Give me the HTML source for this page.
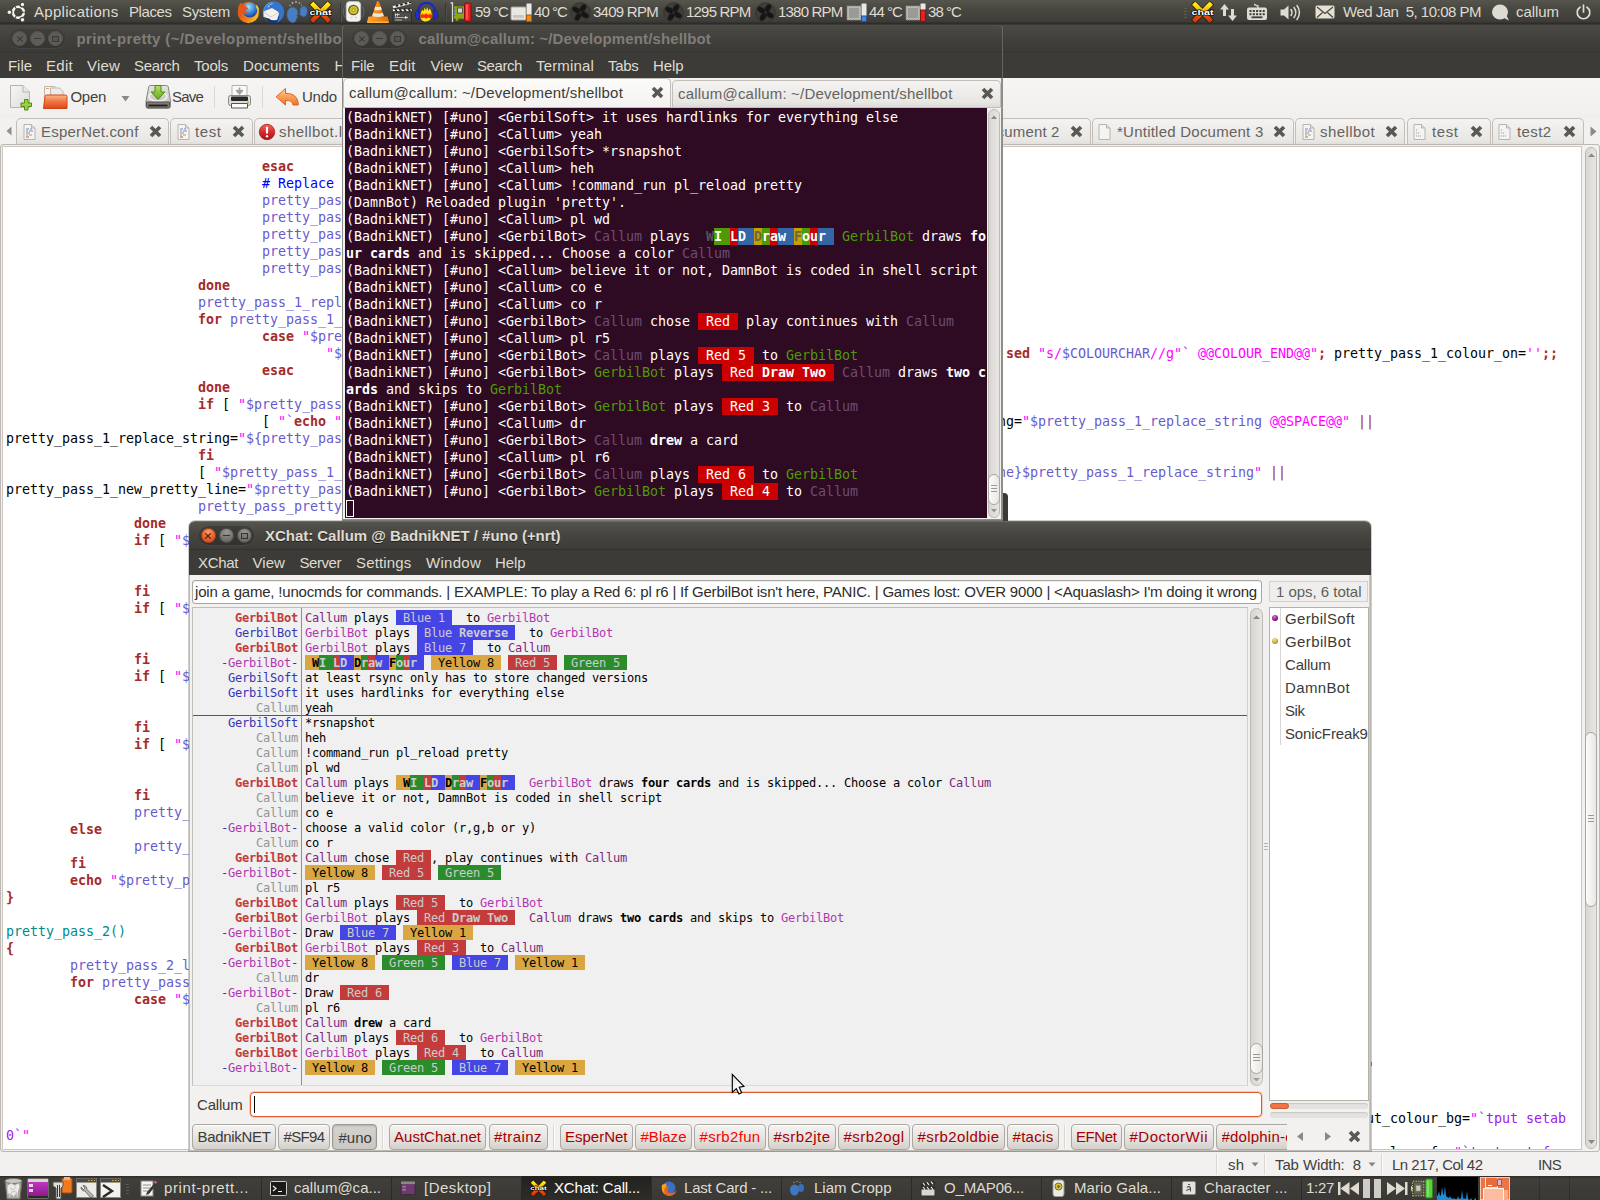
<!DOCTYPE html>
<html><head><meta charset="utf-8"><title>Desktop</title><style>
html,body{margin:0;padding:0;}
body{width:1600px;height:1200px;position:relative;overflow:hidden;background:#f2f1f0;font-family:'Liberation Sans', sans-serif;}
#root{position:absolute;left:0;top:0;width:1600px;height:1200px;overflow:hidden;}
#root div,#root svg,#root span{position:absolute;}
.l{white-space:pre;font-family:'Liberation Sans', sans-serif;}
.ged span{position:absolute;white-space:pre;font-family:'DejaVu Sans Mono', 'Liberation Mono', monospace;font-size:13.33px;line-height:17px;height:17px;letter-spacing:-0.0253px;}
.trm span{position:absolute;white-space:pre;font-family:'DejaVu Sans Mono', 'Liberation Mono', monospace;font-size:13.33px;line-height:17px;height:17px;letter-spacing:-0.0253px;}
.xc span{position:absolute;white-space:pre;font-family:'DejaVu Sans Mono', 'Liberation Mono', monospace;font-size:12px;line-height:17px;height:15px;letter-spacing:-0.2246px;}
</style></head><body><div id="root">
<div style="left:0px;top:24px;width:1600px;height:29px;background:linear-gradient(#2d2c29,#4a4944 4%,#3f3e3a 60%,#3b3a36);"></div><div style="left:0px;top:52px;width:1600px;height:1px;background:#363531;"></div><div style="left:10.0px;top:29.0px;width:55px;height:19px;border-radius:9.500px;background:rgba(0,0,0,.10);box-shadow:0 1px 0 rgba(255,255,255,.05);"></div><div style="left:12.0px;top:31.0px;width:15px;height:15px;box-sizing:border-box;border-radius:50%;background:#5d5c56;border:1px solid #56554f;"></div><svg style="left:15.5px;top:34.5px" width="8" height="8" viewBox="0 0 8 8"><path d="M1.300 1.300l5.400 5.400M6.700 1.300l-5.400 5.400" stroke="#3a3935" stroke-width="1.100"/></svg><div style="left:30.0px;top:31.0px;width:15px;height:15px;box-sizing:border-box;border-radius:50%;background:#5d5c56;border:1px solid #56554f;"></div><div style="left:34.0px;top:38.0px;width:7px;height:1.2px;background:#3a3935;"></div><div style="left:48.0px;top:31.0px;width:15px;height:15px;box-sizing:border-box;border-radius:50%;background:#5d5c56;border:1px solid #56554f;"></div><div style="left:52.0px;top:35.5px;width:7px;height:6px;box-sizing:border-box;border:1px solid #3a3935;background:rgba(0,0,0,.08);"></div><div style="left:0px;top:53px;width:1600px;height:25px;background:#3c3b37;"></div><div style="left:0px;top:78px;width:1600px;height:40px;background:linear-gradient(#f6f5f4,#f0efed);"></div><div style="left:0px;top:118px;width:1600px;height:1060px;background:#f2f1f0;"></div><svg style="left:9px;top:84px" width="24" height="27" viewBox="0 0 24 27"><defs><linearGradient id="npg" x1="0" y1="0" x2="1" y2="1"><stop offset="0" stop-color="#f6f6f5"/><stop offset="1" stop-color="#dcdcd9"/></linearGradient></defs><path d="M1.500 1.500h12.500L20.500 8v15.500h-19z" fill="url(#npg)" stroke="#b5b4af"/><path d="M14 1.500V8h6.500" fill="#e9e9e7" stroke="#b5b4af"/><path d="M15.500 15.500h3.500v3.500h3.500v3.500h-3.500v3.500h-3.500v-3.500h-3.500v-3.500h3.500z" fill="#9bd244" stroke="#4e8a12"/></svg><svg style="left:42px;top:85px" width="27" height="25" viewBox="0 0 27 25"><path d="M2.500 1.500h10l4 4V20h-14z" fill="#f3f3f1" stroke="#b9b8b3"/><path d="M4 3.500h3" stroke="#f0a050"/><path d="M8.500 3h9l3.500 3.500V20h-12.500z" fill="#ecebe8" stroke="#b9b8b3"/><defs><linearGradient id="opg" x1="0" y1="0" x2="0" y2="1"><stop offset="0" stop-color="#f9b98c"/><stop offset=".45" stop-color="#f27a44"/><stop offset="1" stop-color="#e0441a"/></linearGradient></defs><path d="M1.500 23.500L3 11.500q.2-1.500 1.500-1.500h19q1.500 0 1.500 1.500v12z" fill="url(#opg)" stroke="#cf4516"/></svg><svg style="left:121px;top:95px" width="9" height="7" viewBox="0 0 9 7"><path d="M.5 1h8L4.500 6.500z" fill="#8a8984"/></svg><svg style="left:145px;top:84px" width="26" height="26" viewBox="0 0 26 26"><defs><linearGradient id="svd" x1="0" y1="0" x2="0" y2="1"><stop offset="0" stop-color="#e4e4e1"/><stop offset="1" stop-color="#b9b9b5"/></linearGradient><linearGradient id="sva" x1="0" y1="0" x2="0" y2="1"><stop offset="0" stop-color="#b7e265"/><stop offset="1" stop-color="#62a81d"/></linearGradient></defs><path d="M5 1.500h16.500q1.500 0 1.800 1.500l2.200 14v5.500q0 1.500-1.500 1.500h-21.500q-1.500 0-1.500-1.500v-5.500l2.700-14q.3-1.500 1.800-1.500z" fill="url(#svd)" stroke="#8a8984"/><ellipse cx="13" cy="12.500" rx="9" ry="4.500" fill="none" stroke="#f1f1ef" stroke-width="1.600"/><path d="M1.500 18h23v4.500q0 1.500-1.500 1.500h-20q-1.500 0-1.500-1.500z" fill="#7c7b76" stroke="#55544f"/><path d="M3.500 21.500h19" stroke="#1f1e1c" stroke-width="1.800"/><path d="M10 1.500h6v6.500h3.800L13 15.500 6.200 8H10z" fill="url(#sva)" stroke="#4a8a10"/></svg><div style="left:214px;top:86px;width:1px;height:22px;background:#dcdad6;"></div><svg style="left:227px;top:84px" width="25" height="26" viewBox="0 0 25 26"><path d="M5 1.500h15v11h-15z" fill="#fafaf9" stroke="#b3b2ad"/><path d="M12.500 3.500v4M9.500 6.500h6l-3 3.500z" fill="#a3a29d" stroke="#a3a29d" stroke-width="1.600" stroke-linejoin="round"/><path d="M3.500 11.500h18q2 0 2 2v6q0 2-2 2h-18q-2 0-2-2v-6q0-2 2-2z" fill="#dddcd8" stroke="#8a8984"/><rect x="4" y="12.500" width="17" height="4.500" rx="1" fill="#2a2927"/><path d="M4.500 19.500h16v4.500h-16z" fill="#fbfbfa" stroke="#55544f"/><circle cx="21" cy="18.500" r=".9" fill="#6fd02e"/></svg><div style="left:262px;top:86px;width:1px;height:22px;background:#dcdad6;"></div><svg style="left:275px;top:86px" width="25" height="22" viewBox="0 0 25 22"><defs><linearGradient id="ung" x1="0" y1="0" x2="0" y2="1"><stop offset="0" stop-color="#fdd3a3"/><stop offset=".45" stop-color="#f8a561"/><stop offset="1" stop-color="#ee7326"/></linearGradient></defs><path d="M10.500 2.500L1.200 10.800l9.300 8.200v-4.500c4.500 0 6.500.5 7.500 4.500h5.300c0-8-5-11.700-12.800-11.700z" fill="url(#ung)" stroke="#d9651c" stroke-linejoin="round"/></svg><svg style="left:6px;top:126px" width="6" height="10" viewBox="0 0 6 10"><path d="M5.500.5v9L.5 5z" fill="#8f8e89"/></svg><div style="left:16px;top:118px;width:151px;height:27px;border:1px solid #c3beb8;border-bottom:none;border-radius:5px 5px 0 0;background:linear-gradient(#f4f3f1,#e9e7e4 80%,#dddbd7);"></div><svg style="left:23px;top:124px" width="13" height="16" viewBox="0 0 13 16"><path d="M1 .5h7.500L12 4v11.500H1z" fill="#f4f4f2" stroke="#b5b4af"/><path d="M8.500.5V4H12" fill="#dedcd8" stroke="#b5b4af"/><path d="M3 5h3M7 5h2" stroke="#6a8ed0" stroke-width="1"/><path d="M3 7h2M6 7h4" stroke="#b070c0" stroke-width="1"/><path d="M3 9h4" stroke="#6ab04c" stroke-width="1"/><path d="M3 11h2M6 11h3" stroke="#999" stroke-width="1"/><path d="M3 13h3" stroke="#e04a4a" stroke-width="1"/></svg><svg style="left:149px;top:125px" width="13" height="13" viewBox="0 0 13 13"><path d="M2 2l9 9M11 2l-9 9" stroke="#595853" stroke-width="3.600" stroke-linecap="butt"/></svg><div style="left:170px;top:118px;width:81px;height:27px;border:1px solid #c3beb8;border-bottom:none;border-radius:5px 5px 0 0;background:linear-gradient(#f4f3f1,#e9e7e4 80%,#dddbd7);"></div><svg style="left:177px;top:124px" width="13" height="16" viewBox="0 0 13 16"><path d="M1 .5h7.500L12 4v11.500H1z" fill="#f4f4f2" stroke="#b5b4af"/><path d="M8.500.5V4H12" fill="#dedcd8" stroke="#b5b4af"/><path d="M3 5h3M7 5h2" stroke="#6a8ed0" stroke-width="1"/><path d="M3 7h2M6 7h4" stroke="#b070c0" stroke-width="1"/><path d="M3 9h4" stroke="#6ab04c" stroke-width="1"/><path d="M3 11h2M6 11h3" stroke="#999" stroke-width="1"/><path d="M3 13h3" stroke="#e04a4a" stroke-width="1"/></svg><svg style="left:232px;top:125px" width="13" height="13" viewBox="0 0 13 13"><path d="M2 2l9 9M11 2l-9 9" stroke="#595853" stroke-width="3.600" stroke-linecap="butt"/></svg><div style="left:254px;top:118px;width:164px;height:27px;border:1px solid #c3beb8;border-bottom:none;border-radius:5px 5px 0 0;background:linear-gradient(#f4f3f1,#e9e7e4 80%,#dddbd7);"></div><svg style="left:258px;top:123px" width="18" height="18" viewBox="0 0 18 18"><defs><linearGradient id="erg" x1="0" y1="0" x2="0" y2="1"><stop offset="0" stop-color="#ec6a5e"/><stop offset=".5" stop-color="#d62a2c"/><stop offset="1" stop-color="#a80f1a"/></linearGradient></defs><circle cx="9" cy="9" r="7.700" fill="url(#erg)" stroke="#b0161c" stroke-width=".8"/><path d="M9 3.800v6.700" stroke="#fff" stroke-width="2.200"/><circle cx="9" cy="13.200" r="1.200" fill="#fff"/></svg><div style="left:880px;top:118px;width:209px;height:27px;border:1px solid #c3beb8;border-bottom:none;border-radius:5px 5px 0 0;background:linear-gradient(#f4f3f1,#e9e7e4 80%,#dddbd7);"></div><svg style="left:1070px;top:125px" width="13" height="13" viewBox="0 0 13 13"><path d="M2 2l9 9M11 2l-9 9" stroke="#595853" stroke-width="3.600" stroke-linecap="butt"/></svg><div style="left:1092px;top:118px;width:200px;height:27px;border:1px solid #c3beb8;border-bottom:none;border-radius:5px 5px 0 0;background:linear-gradient(#f4f3f1,#e9e7e4 80%,#dddbd7);"></div><svg style="left:1098px;top:124px" width="13" height="16" viewBox="0 0 13 16"><path d="M1 .5h7.500L12 4v11.500H1z" fill="#f4f4f2" stroke="#b5b4af"/><path d="M8.500.5V4H12" fill="#dedcd8" stroke="#b5b4af"/></svg><svg style="left:1273px;top:125px" width="13" height="13" viewBox="0 0 13 13"><path d="M2 2l9 9M11 2l-9 9" stroke="#595853" stroke-width="3.600" stroke-linecap="butt"/></svg><div style="left:1295px;top:118px;width:108px;height:27px;border:1px solid #c3beb8;border-bottom:none;border-radius:5px 5px 0 0;background:linear-gradient(#f4f3f1,#e9e7e4 80%,#dddbd7);"></div><svg style="left:1302px;top:124px" width="13" height="16" viewBox="0 0 13 16"><path d="M1 .5h7.500L12 4v11.500H1z" fill="#f4f4f2" stroke="#b5b4af"/><path d="M8.500.5V4H12" fill="#dedcd8" stroke="#b5b4af"/><path d="M3 5h3M7 5h2" stroke="#6a8ed0" stroke-width="1"/><path d="M3 7h2M6 7h4" stroke="#b070c0" stroke-width="1"/><path d="M3 9h4" stroke="#6ab04c" stroke-width="1"/><path d="M3 11h2M6 11h3" stroke="#999" stroke-width="1"/><path d="M3 13h3" stroke="#e04a4a" stroke-width="1"/></svg><svg style="left:1385px;top:125px" width="13" height="13" viewBox="0 0 13 13"><path d="M2 2l9 9M11 2l-9 9" stroke="#595853" stroke-width="3.600" stroke-linecap="butt"/></svg><div style="left:1407px;top:118px;width:82px;height:27px;border:1px solid #c3beb8;border-bottom:none;border-radius:5px 5px 0 0;background:linear-gradient(#f4f3f1,#e9e7e4 80%,#dddbd7);"></div><svg style="left:1413px;top:124px" width="13" height="16" viewBox="0 0 13 16"><path d="M1 .5h7.500L12 4v11.500H1z" fill="#f4f4f2" stroke="#b5b4af"/><path d="M8.500.5V4H12" fill="#dedcd8" stroke="#b5b4af"/><path d="M3 6h2M3 9h4M3 12h5" stroke="#9a9994" stroke-width="1.200" stroke-dasharray="1.200 .8"/></svg><svg style="left:1470px;top:125px" width="13" height="13" viewBox="0 0 13 13"><path d="M2 2l9 9M11 2l-9 9" stroke="#595853" stroke-width="3.600" stroke-linecap="butt"/></svg><div style="left:1492px;top:118px;width:90px;height:27px;border:1px solid #c3beb8;border-bottom:none;border-radius:5px 5px 0 0;background:linear-gradient(#f4f3f1,#e9e7e4 80%,#dddbd7);"></div><svg style="left:1498px;top:124px" width="13" height="16" viewBox="0 0 13 16"><path d="M1 .5h7.500L12 4v11.500H1z" fill="#f4f4f2" stroke="#b5b4af"/><path d="M8.500.5V4H12" fill="#dedcd8" stroke="#b5b4af"/><path d="M3 6h2M3 9h4M3 12h5" stroke="#9a9994" stroke-width="1.200" stroke-dasharray="1.200 .8"/></svg><svg style="left:1563px;top:125px" width="13" height="13" viewBox="0 0 13 13"><path d="M2 2l9 9M11 2l-9 9" stroke="#595853" stroke-width="3.600" stroke-linecap="butt"/></svg><svg style="left:1590px;top:126px" width="7" height="11" viewBox="0 0 7 11"><path d="M.5.500v10l6-5z" fill="#8a8984"/></svg><div style="left:0px;top:144px;width:1598px;height:1006px;border:1px solid #bdb8b2;border-radius:3px;background:#f2f1f0;"></div><div class="ged" style="left:2px;top:146px;width:1580px;height:1004px;background:#fff;border:1px solid #c9c5c0;box-sizing:border-box;overflow:hidden;"><span style="left:259px;top:11px;color:#a52a2a;font-weight:700;">esac</span><span style="left:259px;top:28px;color:#0000ff;"># Replace colour codes</span><span style="left:259px;top:45px;color:#6a5acd;">pretty_pass_1_colour_on=</span><span style="left:259px;top:62px;color:#6a5acd;">pretty_pass_1_replace_string=</span><span style="left:259px;top:79px;color:#6a5acd;">pretty_pass_1_new_pretty_line=</span><span style="left:259px;top:96px;color:#6a5acd;">pretty_pass_1_count=</span><span style="left:259px;top:113px;color:#6a5acd;">pretty_pass_1_word=</span><span style="left:195px;top:130px;color:#a52a2a;font-weight:700;">done</span><span style="left:195px;top:147px;color:#6a5acd;">pretty_pass_1_replace_string=</span><span style="left:195px;top:164px;color:#a52a2a;font-weight:700;">for</span><span style="left:227px;top:164px;color:#6a5acd;">pretty_pass_1_word in</span><span style="left:259px;top:181px;color:#a52a2a;font-weight:700;">case</span><span style="left:299px;top:181px;color:#ff00ff;">"</span><span style="left:307px;top:181px;color:#6a5acd;">$pretty_pass_1_word</span><span style="left:323px;top:198px;color:#ff00ff;">"</span><span style="left:331px;top:198px;color:#6a5acd;">$COLOURCHAR</span><span style="left:259px;top:215px;color:#a52a2a;font-weight:700;">esac</span><span style="left:195px;top:232px;color:#a52a2a;font-weight:700;">done</span><span style="left:195px;top:249px;color:#a52a2a;font-weight:700;">if</span><span style="left:219px;top:249px;color:#000;">[</span><span style="left:235px;top:249px;color:#ff00ff;">"</span><span style="left:243px;top:249px;color:#6a5acd;">$pretty_pass_1_colour_on</span><span style="left:259px;top:266px;color:#000;">[</span><span style="left:275px;top:266px;color:#ff00ff;">"</span><span style="left:283px;top:266px;color:#a020f0;">`</span><span style="left:291px;top:266px;color:#a52a2a;font-weight:700;">echo</span><span style="left:331px;top:266px;color:#ff00ff;">"</span><span style="left:339px;top:266px;color:#6a5acd;">$pretty</span><span style="left:3px;top:283px;color:#000;">pretty_pass_1_replace_string=</span><span style="left:235px;top:283px;color:#ff00ff;">"</span><span style="left:243px;top:283px;color:#6a5acd;">${pretty_pass_1</span><span style="left:195px;top:300px;color:#a52a2a;font-weight:700;">fi</span><span style="left:195px;top:317px;color:#000;">[</span><span style="left:211px;top:317px;color:#ff00ff;">"</span><span style="left:219px;top:317px;color:#6a5acd;">$pretty_pass_1_new</span><span style="left:3px;top:334px;color:#000;">pretty_pass_1_new_pretty_line=</span><span style="left:243px;top:334px;color:#ff00ff;">"</span><span style="left:251px;top:334px;color:#6a5acd;">$pretty_pass_1</span><span style="left:195px;top:351px;color:#6a5acd;">pretty_pass_pretty_line=</span><span style="left:131px;top:368px;color:#a52a2a;font-weight:700;">done</span><span style="left:131px;top:385px;color:#a52a2a;font-weight:700;">if</span><span style="left:155px;top:385px;color:#000;">[</span><span style="left:171px;top:385px;color:#ff00ff;">"</span><span style="left:179px;top:385px;color:#6a5acd;">$pretty</span><span style="left:131px;top:453px;color:#a52a2a;font-weight:700;">if</span><span style="left:155px;top:453px;color:#000;">[</span><span style="left:171px;top:453px;color:#ff00ff;">"</span><span style="left:179px;top:453px;color:#6a5acd;">$pretty</span><span style="left:131px;top:521px;color:#a52a2a;font-weight:700;">if</span><span style="left:155px;top:521px;color:#000;">[</span><span style="left:171px;top:521px;color:#ff00ff;">"</span><span style="left:179px;top:521px;color:#6a5acd;">$pretty</span><span style="left:131px;top:589px;color:#a52a2a;font-weight:700;">if</span><span style="left:155px;top:589px;color:#000;">[</span><span style="left:171px;top:589px;color:#ff00ff;">"</span><span style="left:179px;top:589px;color:#6a5acd;">$pretty</span><span style="left:131px;top:436px;color:#a52a2a;font-weight:700;">fi</span><span style="left:131px;top:504px;color:#a52a2a;font-weight:700;">fi</span><span style="left:131px;top:572px;color:#a52a2a;font-weight:700;">fi</span><span style="left:131px;top:640px;color:#a52a2a;font-weight:700;">fi</span><span style="left:131px;top:657px;color:#6a5acd;">pretty_line=</span><span style="left:67px;top:674px;color:#a52a2a;font-weight:700;">else</span><span style="left:131px;top:691px;color:#6a5acd;">pretty_line=</span><span style="left:67px;top:708px;color:#a52a2a;font-weight:700;">fi</span><span style="left:67px;top:725px;color:#a52a2a;font-weight:700;">echo</span><span style="left:107px;top:725px;color:#ff00ff;">"</span><span style="left:115px;top:725px;color:#6a5acd;">$pretty_pass_pretty</span><span style="left:3px;top:742px;color:#a52a2a;font-weight:700;">}</span><span style="left:3px;top:776px;color:#008a8c;">pretty_pass_2()</span><span style="left:3px;top:793px;color:#a52a2a;font-weight:700;">{</span><span style="left:67px;top:810px;color:#6a5acd;">pretty_pass_2_line=</span><span style="left:67px;top:827px;color:#a52a2a;font-weight:700;">for</span><span style="left:99px;top:827px;color:#6a5acd;">pretty_pass_2_word</span><span style="left:131px;top:844px;color:#a52a2a;font-weight:700;">case</span><span style="left:171px;top:844px;color:#ff00ff;">"</span><span style="left:179px;top:844px;color:#6a5acd;">$pretty</span><span style="left:3px;top:980px;color:#a020f0;">0`</span><span style="left:19px;top:980px;color:#ff00ff;">"</span><span style="left:1003px;top:198px;color:#a52a2a;font-weight:700;">sed</span><span style="left:1035px;top:198px;color:#ff00ff;">"s/</span><span style="left:1059px;top:198px;color:#6a5acd;">$COLOURCHAR</span><span style="left:1147px;top:198px;color:#ff00ff;">//g"</span><span style="left:1179px;top:198px;color:#a020f0;">`</span><span style="left:1195px;top:198px;color:#ff00ff;">@@COLOUR_END@@"</span><span style="left:1315px;top:198px;color:#a52a2a;font-weight:700;">;</span><span style="left:1331px;top:198px;color:#000;">pretty_pass_1_colour_on=</span><span style="left:1523px;top:198px;color:#ff00ff;">''</span><span style="left:1539px;top:198px;color:#a52a2a;font-weight:700;">;;</span><span style="left:995px;top:266px;color:#000;">ng=</span><span style="left:1019px;top:266px;color:#ff00ff;">"</span><span style="left:1027px;top:266px;color:#6a5acd;">$pretty_pass_1_replace_string</span><span style="left:1267px;top:266px;color:#ff00ff;">@@SPACE@@"</span><span style="left:1355px;top:266px;color:#a52a2a;">||</span><span style="left:995px;top:317px;color:#6a5acd;">ne}$pretty_pass_1_replace_string</span><span style="left:1251px;top:317px;color:#ff00ff;">"</span><span style="left:1267px;top:317px;color:#a52a2a;">||</span><span style="left:1363px;top:912px;color:#ff00ff;">"</span><span style="left:1363px;top:963px;color:#000;">ut_colour_bg=</span><span style="left:1467px;top:963px;color:#ff00ff;">"</span><span style="left:1475px;top:963px;color:#a020f0;">`tput setab</span><span style="left:1363px;top:997px;color:#000;">_colour_fg=</span><span style="left:1451px;top:997px;color:#ff00ff;">"</span><span style="left:1459px;top:997px;color:#a020f0;">`tput setaf</span></div><div style="left:1585px;top:147px;width:12px;height:1002px;border:1px solid #bdb9b3;border-radius:7px;background:linear-gradient(90deg,#d9d6d2,#e8e6e3);box-sizing:border-box;"></div><svg style="left:1588px;top:153px" width="7" height="4" viewBox="0 0 7 4"><path d="M0 4L3.500 .5 7 4z" fill="#8a8883"/></svg><svg style="left:1588px;top:1140px" width="7" height="4" viewBox="0 0 7 4"><path d="M0 0l3.500 4L7 0z" fill="#8a8883"/></svg><div style="left:1585px;top:732px;width:12px;height:175px;border:1px solid #a9a59f;border-radius:7px;background:linear-gradient(90deg,#fbfbfa,#e9e7e4);box-sizing:border-box;"></div><div style="left:1588px;top:815px;width:6px;height:8px;background:repeating-linear-gradient(#9c9993 0 1px,transparent 1px 3px);"></div><div style="left:0px;top:1152px;width:1600px;height:24px;background:#f2f1f0;"></div><div style="left:1216px;top:1154px;width:1px;height:21px;background:#dad7d2;border-right:1px solid #fbfaf9;"></div><div style="left:1264px;top:1154px;width:1px;height:21px;background:#dad7d2;border-right:1px solid #fbfaf9;"></div><div style="left:1381px;top:1154px;width:1px;height:21px;background:#dad7d2;border-right:1px solid #fbfaf9;"></div><svg style="left:1251px;top:1162px" width="8" height="5" viewBox="0 0 8 5"><path d="M.5.500h7L4 4.500z" fill="#85847f"/></svg><svg style="left:1368px;top:1162px" width="8" height="5" viewBox="0 0 8 5"><path d="M.5.500h7L4 4.500z" fill="#85847f"/></svg><span class="l" style="left:76.5px;top:31.30px;font-size:15px;line-height:15px;color:#807d78;font-weight:700;letter-spacing:0.357px;">print-pretty (~/Development/shellbot</span><span class="l" style="left:8.0px;top:58.30px;font-size:15px;line-height:15px;color:#dfdbd2;letter-spacing:-0.043px;">File</span><span class="l" style="left:46.0px;top:58.30px;font-size:15px;line-height:15px;color:#dfdbd2;letter-spacing:0.285px;">Edit</span><span class="l" style="left:87.0px;top:58.30px;font-size:15px;line-height:15px;color:#dfdbd2;letter-spacing:0.188px;">View</span><span class="l" style="left:134.0px;top:58.30px;font-size:15px;line-height:15px;color:#dfdbd2;letter-spacing:-0.339px;">Search</span><span class="l" style="left:194.0px;top:58.30px;font-size:15px;line-height:15px;color:#dfdbd2;letter-spacing:-0.206px;">Tools</span><span class="l" style="left:243.0px;top:58.30px;font-size:15px;line-height:15px;color:#dfdbd2;letter-spacing:0.069px;">Documents</span><span class="l" style="left:334.5px;top:58.30px;font-size:15px;line-height:15px;color:#dfdbd2;letter-spacing:-0.090px;">Help</span><span class="l" style="left:70.5px;top:89.10px;font-size:15px;line-height:15px;color:#42413d;letter-spacing:-0.301px;">Open</span><span class="l" style="left:172.0px;top:89.10px;font-size:15px;line-height:15px;color:#42413d;letter-spacing:-0.801px;">Save</span><span class="l" style="left:302.0px;top:89.10px;font-size:15px;line-height:15px;color:#42413d;letter-spacing:-0.215px;">Undo</span><span class="l" style="left:41.0px;top:124.30px;font-size:15px;line-height:15px;color:#65635e;letter-spacing:0.189px;">EsperNet.conf</span><span class="l" style="left:195.0px;top:124.30px;font-size:15px;line-height:15px;color:#65635e;letter-spacing:0.578px;">test</span><span class="l" style="left:279.0px;top:124.30px;font-size:15px;line-height:15px;color:#65635e;letter-spacing:0.426px;">shellbot.log</span><span class="l" style="left:915.0px;top:124.30px;font-size:15px;line-height:15px;color:#65635e;letter-spacing:0.138px;">*Untitled Document 2</span><span class="l" style="left:1117.0px;top:124.30px;font-size:15px;line-height:15px;color:#65635e;letter-spacing:0.237px;">*Untitled Document 3</span><span class="l" style="left:1320.0px;top:124.30px;font-size:15px;line-height:15px;color:#65635e;letter-spacing:0.412px;">shellbot</span><span class="l" style="left:1432.0px;top:124.30px;font-size:15px;line-height:15px;color:#65635e;letter-spacing:0.578px;">test</span><span class="l" style="left:1517.0px;top:124.30px;font-size:15px;line-height:15px;color:#65635e;letter-spacing:0.394px;">test2</span><span class="l" style="left:1228.0px;top:1157.30px;font-size:15px;line-height:15px;color:#42413d;letter-spacing:0.328px;">sh</span><span class="l" style="left:1275.0px;top:1157.30px;font-size:15px;line-height:15px;color:#42413d;letter-spacing:-0.119px;white-space:pre;">Tab Width:  8</span><span class="l" style="left:1392.0px;top:1157.30px;font-size:15px;line-height:15px;color:#42413d;letter-spacing:-0.506px;">Ln 217, Col 42</span><span class="l" style="left:1538.0px;top:1157.30px;font-size:15px;line-height:15px;color:#42413d;letter-spacing:-0.672px;">INS</span>
<div style="left:0px;top:0px;width:1600px;height:24px;background:linear-gradient(#55544d,#48473f 40%,#3e3d39 88%,#2a2926);"></div><svg style="left:7px;top:1px" width="23" height="23" viewBox="0 0 23 23"><circle cx="11.400" cy="11.200" r="5.500" fill="none" stroke="#f7f5f1" stroke-width="2.400"/><g stroke="#484741" stroke-width="1.100"><path d="M11.400 11.200L19.500 11.200M11.400 11.200L7.300 4.200M11.400 11.200L7.300 18.200"/></g><g fill="#484741"><circle cx="2.600" cy="11.200" r="2.900"/><circle cx="15.500" cy="3.700" r="2.900"/><circle cx="15.500" cy="18.700" r="2.900"/></g><g fill="#f7f5f1"><circle cx="2.400" cy="11.200" r="1.700"/><circle cx="15.500" cy="3.500" r="1.700"/><circle cx="15.500" cy="18.800" r="1.700"/></g></svg><svg style="left:236px;top:0px" width="25" height="25" viewBox="0 0 25 25"><defs><radialGradient id="ffb" cx=".42" cy=".3" r=".75"><stop offset="0" stop-color="#a8defa"/><stop offset=".5" stop-color="#3f8fdc"/><stop offset="1" stop-color="#16328a"/></radialGradient><linearGradient id="ffo" x1="0" y1=".3" x2="1" y2=".7"><stop offset="0" stop-color="#df4f17"/><stop offset=".55" stop-color="#ee7d1b"/><stop offset="1" stop-color="#f9c92c"/></linearGradient></defs><circle cx="12.300" cy="12.600" r="10.600" fill="url(#ffo)"/><circle cx="13.800" cy="10" r="7.500" fill="url(#ffb)"/><path d="M2 10C1.800 6.500 3.300 3.800 5.300 2.200 5.300 4 6.300 5 8.300 5.500 10 6 11.500 7.500 12.500 9.500 11 9.300 9.800 9.800 9 11 10.500 11.200 11.500 12 12 13.200 9 14.700 6.500 13.700 5.500 11.700 5 13.700 5.800 16 7.500 18 4 16.500 2.200 13.500 2 10z" fill="#e3581a"/><path d="M20.500 4.500c2 2 3 5 2.500 8-.5-2-1.500-3.500-3-4.500z" fill="#f9c92c"/></svg><svg style="left:261px;top:0px" width="25" height="25" viewBox="0 0 25 25"><defs><linearGradient id="tbb" x1="0" y1="0" x2=".6" y2="1"><stop offset="0" stop-color="#6aaef0"/><stop offset=".5" stop-color="#2f6cc4"/><stop offset="1" stop-color="#173a86"/></linearGradient></defs><circle cx="12.600" cy="12.300" r="10.700" fill="url(#tbb)"/><path d="M2.500 11.500L11 8l7.500 4.500-2.500 7.500-10 .5-3.500-4z" fill="#f4f1ec"/><path d="M3 12l7 5 8-4.500" fill="none" stroke="#c9c5bd" stroke-width=".8"/><path d="M4.500 9C6 4.500 9.500 2 13.500 2c5 0 9 3.800 9.600 8.800.6 5.500-2.600 10.200-7.600 12 2.800-3 3.700-6.800 2.200-10.300C16.200 9 13 7.600 10 8c-1.800.3-3.500 1-5.500 1z" fill="#3576cc"/><path d="M6 7.500C7.500 4.500 10 3 13 3c-2 .8-3.200 2-3.800 4z" fill="#8cc4f5"/><circle cx="9.300" cy="6" r=".7" fill="#10244f"/><path d="M3 16.500c1.500 3.500 5 6 9 6 1.500 0 3-.4 4-1-3 0-6-1-8-3-1.500 0-3.500-.8-5-2z" fill="#15306e"/></svg><svg style="left:285px;top:0px" width="25" height="25" viewBox="0 0 25 25"><path d="M2 14.500C2 10 4.500 7.300 7.700 7.300c3 0 5 2.400 5 5.400 0 1.300-.4 2.300-.9 3l1 1.600-1.200.6c0 2.500-1.500 4.600-3.600 4.600C4.500 22.500 2 19 2 14.500z" fill="#4a7cc0" stroke="#3a66a6" stroke-width=".6"/><path d="M15 10.800c0-2.600 1.500-4.600 3.600-4.600 2 0 3.600 2 3.600 5 0 3-1.600 5.500-3.700 5.500-1 0-1.900-.5-2.500-1.400l-1.500-.6.800-1.500c-.2-.7-.300-1.500-.300-2.400z" fill="#4a7cc0" stroke="#3a66a6" stroke-width=".6"/><g fill="#b9b7ae"><circle cx="5" cy="5.500" r=".7"/><circle cx="7.500" cy="3" r=".9"/><circle cx="11" cy="2" r=".9"/><circle cx="14.500" cy="3" r=".8"/><circle cx="16.500" cy="5" r=".6"/></g></svg><svg style="left:309px;top:0.5px" width="23" height="23" viewBox="0 0 24 24"><defs><linearGradient id="xg1" x1="0" y1="0" x2="0" y2="1"><stop offset="0" stop-color="#ffe81a"/><stop offset=".46" stop-color="#f7a600"/><stop offset=".54" stop-color="#f4650a"/><stop offset="1" stop-color="#d93a08"/></linearGradient></defs><path d="M4.500 4L19.500 19.500M19.500 4L4.500 19.500" stroke="#2a1a08" stroke-width="6.400" stroke-linecap="square" fill="none"/><path d="M4.500 4L19.500 19.500M19.500 4L4.500 19.500" stroke="url(#xg1)" stroke-width="4.800" stroke-linecap="square" fill="none"/><text x="12" y="14.600" text-anchor="middle" font-family="Liberation Sans, sans-serif" font-weight="700" font-size="7.800" fill="#fff" stroke="#000" stroke-width="1.200" paint-order="stroke" textLength="23" lengthAdjust="spacingAndGlyphs">chat</text></svg><div style="left:340px;top:3px;width:1px;height:19px;background:#36352f;border-right:1px solid #55544d;"></div><svg style="left:342px;top:0px" width="23" height="24" viewBox="0 0 23 24"><path d="M2.500 6.500c-1.500 3-1.500 7 0 10.500M20.800 6.500c1.500 3 1.500 7 0 10.500" fill="none" stroke="#4a6f9e" stroke-width=".9"/><rect x="4.200" y="1.500" width="14.500" height="20" rx="3.500" fill="#f3f3f1" stroke="#c4c3be" stroke-width=".8"/><circle cx="11.500" cy="10" r="4.700" fill="#d9c62a" stroke="#5e5a22" stroke-width="1.300"/><circle cx="11.500" cy="10" r="2.400" fill="#b9a820"/><circle cx="11.500" cy="10" r="1" fill="#c9c9c4"/><path d="M8.500 17.500h2M12.500 17.500h2.500" stroke="#d2d1cc" stroke-width="1.600"/></svg><svg style="left:366px;top:0px" width="25" height="25" viewBox="0 0 25 25"><defs><linearGradient id="vlg" x1="0" y1="0" x2="1" y2="0"><stop offset="0" stop-color="#f9a33a"/><stop offset=".5" stop-color="#f48a12"/><stop offset="1" stop-color="#e26f05"/></linearGradient></defs><path d="M2.500 16.500h19l1.500 5.500q0 1-1 1H2q-1 0-1-1z" fill="url(#vlg)"/><path d="M1.200 21.500h21.600v.8q0 .7-1 .7H2.200q-1 0-1-.7z" fill="#fbb040"/><path d="M11 1.500q1-1.200 2 0L18.500 18q-6.500 2.500-13 0z" fill="url(#vlg)"/><path d="M9.200 6.500q2.800 1 5.600 0l1 3.200q-3.800 1.300-7.600 0z" fill="#e9e7e4"/><path d="M7.200 12.700q4.800 1.700 9.600 0l1 3.300q-5.800 2-11.600 0z" fill="#e9e7e4"/></svg><svg style="left:391px;top:0px" width="23" height="24" viewBox="0 0 23 24"><path d="M1.200 5.800L20 1l.8 3L2 8.800z" fill="#f4f4f2" stroke="#2c2b28" stroke-width=".6"/><g fill="#1d1c1a"><ellipse cx="6" cy="5.700" rx="1.500" ry="1" transform="rotate(-14 6 5.700)"/><ellipse cx="10.500" cy="4.600" rx="1.500" ry="1" transform="rotate(-14 10.500 4.600)"/><ellipse cx="15" cy="3.500" rx="1.500" ry="1" transform="rotate(-14 15 3.500)"/><ellipse cx="19" cy="2.500" rx="1.200" ry=".9" transform="rotate(-14 19 2.500)"/></g><path d="M1.500 9h19.500v2.800H1.500z" fill="#f4f4f2" stroke="#2c2b28" stroke-width=".6"/><path d="M4 9l2 2.800M8.500 9l2 2.800M13 9l2 2.800M17.500 9l2 2.800" stroke="#1d1c1a" stroke-width="1.600"/><rect x="2" y="11.800" width="18.500" height="10.200" fill="#4d4c49" stroke="#2c2b28" stroke-width=".8"/><path d="M4 14.500h5M4 17.500h13M4 20h7" stroke="#c9c8c3" stroke-width=".8"/><path d="M14 16l3 1.500-3 1.500z" fill="#e9e8e4"/><path d="M4.500 13.500v3M6.500 13.500v3" stroke="#e9e8e4" stroke-width=".8"/></svg><svg style="left:414px;top:0px" width="25" height="25" viewBox="0 0 25 25"><path d="M4 14C3.500 6.500 8 2.800 12.500 2.800S21.500 6.500 21 14" fill="none" stroke="#1a28c4" stroke-width="2.200"/><path d="M1.200 14.500c0-3 1.800-4.500 3.800-4.500v9.500c-2 0-3.800-2-3.800-5zM23.800 14.500c0-3-1.800-4.500-3.800-4.500v9.500c2 0 3.800-2 3.800-5z" fill="#1f2fd0" stroke="#121c8a" stroke-width=".6"/><path d="M6.500 16c0-3 1-5 2-6.500l1 2 1.200-4 1.300 3 1.300-3.500 1.200 4 1.200-2.500c1.200 1.500 2 4 2 7 0 3-2.500 6-6.100 6S6.500 19 6.500 16z" fill="#ffe21a"/><path d="M6.600 14.500l2-.8 1.500.8 2-1.200 2 1.200 2-.8 2.200.8v3l-2.200.8-2-.8-2 1.200-2-1.200-1.500.8-2-.8z" fill="#ff2a0a"/><path d="M6.600 14.500l2-.8 1.500.8 2-1.200 2 1.200 2-.8 2.200.8" fill="none" stroke="#ff9a10" stroke-width=".9"/></svg><div style="left:445px;top:3px;width:1px;height:19px;background:#3a3934;border-right:1px solid #4c4b45;"></div><svg style="left:449px;top:2px" width="24" height="21" viewBox="0 0 24 21"><path d="M1.500 1h2v19" fill="none" stroke="#d9d9d4" stroke-width="1.300"/><path d="M4.500 4h11v13h-6v2h-3v-2h-2z" fill="#93a21c" stroke="#4f5a0c" stroke-width=".8"/><rect x="8.500" y="6" width="5" height="5" fill="#d5d5d0" stroke="#3a3a38" stroke-width=".8"/><path d="M5.500 6.500v1.500M5.500 9.500v1.500M5.500 12.500v1.500" stroke="#3b6fd0" stroke-width="1.400"/><rect x="15.500" y="1" width="6.500" height="18.500" rx="1.500" fill="#ea2020" stroke="#8a0c0c"/><rect x="17" y="2.500" width="2" height="15" fill="#f45a5a"/></svg><svg style="left:510px;top:2px" width="24" height="21" viewBox="0 0 24 21"><rect x="1" y="5" width="15" height="13" rx="1" fill="#e9e8e4" stroke="#a3a29d"/><rect x="3" y="13" width="11" height="3" fill="#c8c7c2"/><rect x="16.500" y="1.500" width="5" height="18" rx="1" fill="#ecebe8" stroke="#a3a29d"/><rect x="16.500" y="13" width="5" height="6.500" fill="#f08a1c" stroke="#a85808"/></svg><svg style="left:570px;top:2px" width="21" height="21" viewBox="0 0 21 21"><circle cx="10.500" cy="10.500" r="9.800" fill="#3f3e3a" stroke="#35342f" stroke-width="1"/><ellipse cx="10.500" cy="5.800" rx="2.700" ry="4.600" transform="rotate(30 10.500 10.500)" fill="#161514" stroke="#2f2e2b" stroke-width=".5"/><ellipse cx="10.500" cy="5.800" rx="2.700" ry="4.600" transform="rotate(120 10.500 10.500)" fill="#161514" stroke="#2f2e2b" stroke-width=".5"/><ellipse cx="10.500" cy="5.800" rx="2.700" ry="4.600" transform="rotate(210 10.500 10.500)" fill="#161514" stroke="#2f2e2b" stroke-width=".5"/><ellipse cx="10.500" cy="5.800" rx="2.700" ry="4.600" transform="rotate(300 10.500 10.500)" fill="#161514" stroke="#2f2e2b" stroke-width=".5"/><circle cx="10.500" cy="10.500" r="1.500" fill="#2a2927"/></svg><svg style="left:663px;top:2px" width="21" height="21" viewBox="0 0 21 21"><circle cx="10.500" cy="10.500" r="9.800" fill="#3f3e3a" stroke="#35342f" stroke-width="1"/><ellipse cx="10.500" cy="5.800" rx="2.700" ry="4.600" transform="rotate(30 10.500 10.500)" fill="#161514" stroke="#2f2e2b" stroke-width=".5"/><ellipse cx="10.500" cy="5.800" rx="2.700" ry="4.600" transform="rotate(120 10.500 10.500)" fill="#161514" stroke="#2f2e2b" stroke-width=".5"/><ellipse cx="10.500" cy="5.800" rx="2.700" ry="4.600" transform="rotate(210 10.500 10.500)" fill="#161514" stroke="#2f2e2b" stroke-width=".5"/><ellipse cx="10.500" cy="5.800" rx="2.700" ry="4.600" transform="rotate(300 10.500 10.500)" fill="#161514" stroke="#2f2e2b" stroke-width=".5"/><circle cx="10.500" cy="10.500" r="1.500" fill="#2a2927"/></svg><svg style="left:755px;top:2px" width="21" height="21" viewBox="0 0 21 21"><circle cx="10.500" cy="10.500" r="9.800" fill="#3f3e3a" stroke="#35342f" stroke-width="1"/><ellipse cx="10.500" cy="5.800" rx="2.700" ry="4.600" transform="rotate(30 10.500 10.500)" fill="#161514" stroke="#2f2e2b" stroke-width=".5"/><ellipse cx="10.500" cy="5.800" rx="2.700" ry="4.600" transform="rotate(120 10.500 10.500)" fill="#161514" stroke="#2f2e2b" stroke-width=".5"/><ellipse cx="10.500" cy="5.800" rx="2.700" ry="4.600" transform="rotate(210 10.500 10.500)" fill="#161514" stroke="#2f2e2b" stroke-width=".5"/><ellipse cx="10.500" cy="5.800" rx="2.700" ry="4.600" transform="rotate(300 10.500 10.500)" fill="#161514" stroke="#2f2e2b" stroke-width=".5"/><circle cx="10.500" cy="10.500" r="1.500" fill="#2a2927"/></svg><svg style="left:846px;top:2px" width="23" height="21" viewBox="0 0 23 21"><rect x="1" y="4" width="14" height="14" fill="#b9b9b4" stroke="#8a8a86" stroke-width="1" stroke-dasharray="1.500 1"/><rect x="3" y="6" width="10" height="10" fill="#9a9a96"/><rect x="15.500" y="1.500" width="5" height="18" rx="1" fill="#e8e8e6" stroke="#9c9c98"/><rect x="15.500" y="14" width="5" height="5.500" fill="#4a86d8" stroke="#1f4f99"/></svg><svg style="left:905px;top:2px" width="23" height="21" viewBox="0 0 23 21"><rect x="1" y="4" width="14" height="14" fill="#b9b9b4" stroke="#8a8a86" stroke-width="1" stroke-dasharray="1.500 1"/><rect x="3" y="6" width="10" height="10" fill="#9a9a96"/><rect x="15.500" y="1.500" width="5" height="18" rx="1" fill="#e8e8e6" stroke="#9c9c98"/><rect x="15.500" y="8" width="5" height="11.500" fill="#e52222" stroke="#8a1010"/></svg><div style="left:1184px;top:8px;width:3px;height:10px;background:repeating-linear-gradient(#5b5a54 0 1px,transparent 1px 3px);"></div><svg style="left:1191px;top:0.5px" width="23" height="23" viewBox="0 0 24 24"><defs><linearGradient id="xg2" x1="0" y1="0" x2="0" y2="1"><stop offset="0" stop-color="#ffe81a"/><stop offset=".46" stop-color="#f7a600"/><stop offset=".54" stop-color="#f4650a"/><stop offset="1" stop-color="#d93a08"/></linearGradient></defs><path d="M4.500 4L19.500 19.500M19.500 4L4.500 19.500" stroke="#2a1a08" stroke-width="6.400" stroke-linecap="square" fill="none"/><path d="M4.500 4L19.500 19.500M19.500 4L4.500 19.500" stroke="url(#xg2)" stroke-width="4.800" stroke-linecap="square" fill="none"/><text x="12" y="14.600" text-anchor="middle" font-family="Liberation Sans, sans-serif" font-weight="700" font-size="7.800" fill="#fff" stroke="#000" stroke-width="1.200" paint-order="stroke" textLength="23" lengthAdjust="spacingAndGlyphs">chat</text></svg><svg style="left:1219px;top:3px" width="19" height="19" viewBox="0 0 19 19"><path d="M5.500 1L10 6.500H7V13H4V6.500H1z" fill="#dfdbd2"/><path d="M13.500 18L9 12.500h3V6h3v6.500h3z" fill="#dfdbd2"/></svg><svg style="left:1246px;top:3px" width="22" height="19" viewBox="0 0 22 19"><path d="M8 1.500c2 0 2 1.500 4 1.500v2" fill="none" stroke="#dfdbd2" stroke-width="1.400"/><rect x="1" y="4.500" width="20" height="12.500" rx="2" fill="#dfdbd2"/><g fill="#3d3c38"><rect x="3.500" y="7" width="2" height="2"/><rect x="6.800" y="7" width="2" height="2"/><rect x="10.100" y="7" width="2" height="2"/><rect x="13.400" y="7" width="2" height="2"/><rect x="16.700" y="7" width="2" height="2"/><rect x="3.500" y="10.200" width="2" height="2"/><rect x="6.800" y="10.200" width="2" height="2"/><rect x="10.100" y="10.200" width="2" height="2"/><rect x="13.400" y="10.200" width="2" height="2"/><rect x="16.700" y="10.200" width="2" height="2"/><rect x="5.500" y="13.400" width="11" height="1.800"/></g></svg><svg style="left:1279px;top:3px" width="23" height="19" viewBox="0 0 23 19"><path d="M1.500 6.500h3.500L9.500 2.500v14L5 12.500H1.500z" fill="#dfdbd2"/><g fill="none" stroke="#dfdbd2" stroke-width="1.500" stroke-linecap="round"><path d="M12 6.500c1.200 1.800 1.200 4.200 0 6"/><path d="M15 4.500c2.200 3 2.200 7 0 10"/><path d="M18 2.500c3.200 4 3.200 10 0 14"/></g></svg><svg style="left:1315px;top:5px" width="20" height="14" viewBox="0 0 20 14"><rect x=".5" y=".5" width="19" height="13" rx="1.500" fill="#e6e0d2"/><path d="M2 2L10 8.500 18 2M2 12.500l5.500-5M18 12.500l-5.500-5" fill="none" stroke="#45443f" stroke-width="1.200"/></svg><svg style="left:1491px;top:4px" width="19" height="17" viewBox="0 0 19 17"><ellipse cx="9" cy="8" rx="8" ry="7.500" fill="#dfdbd2"/><path d="M11 13l7 3.500-3-6z" fill="#dfdbd2"/></svg><svg style="left:1575px;top:4px" width="17" height="17" viewBox="0 0 17 17"><path d="M5 3.200A6.300 6.300 0 1 0 12 3.200" fill="none" stroke="#dfdbd2" stroke-width="1.700" stroke-linecap="round"/><path d="M8.500 1v7" stroke="#dfdbd2" stroke-width="1.700" stroke-linecap="round"/></svg><span class="l" style="left:34.0px;top:4.30px;font-size:15px;line-height:15px;color:#dfdbd2;letter-spacing:0.301px;">Applications</span><span class="l" style="left:129.0px;top:4.30px;font-size:15px;line-height:15px;color:#dfdbd2;letter-spacing:-0.422px;">Places</span><span class="l" style="left:182.0px;top:4.30px;font-size:15px;line-height:15px;color:#dfdbd2;letter-spacing:-0.336px;">System</span><span class="l" style="left:475.0px;top:4.30px;font-size:15px;line-height:15px;color:#dfdbd2;letter-spacing:-0.938px;">59 °C</span><span class="l" style="left:534.0px;top:4.30px;font-size:15px;line-height:15px;color:#dfdbd2;letter-spacing:-0.938px;">40 °C</span><span class="l" style="left:593.0px;top:4.30px;font-size:15px;line-height:15px;color:#dfdbd2;letter-spacing:-0.734px;">3409 RPM</span><span class="l" style="left:686.0px;top:4.30px;font-size:15px;line-height:15px;color:#dfdbd2;letter-spacing:-0.797px;">1295 RPM</span><span class="l" style="left:778.0px;top:4.30px;font-size:15px;line-height:15px;color:#dfdbd2;letter-spacing:-0.797px;">1380 RPM</span><span class="l" style="left:869.0px;top:4.30px;font-size:15px;line-height:15px;color:#dfdbd2;letter-spacing:-0.938px;">44 °C</span><span class="l" style="left:928.0px;top:4.30px;font-size:15px;line-height:15px;color:#dfdbd2;letter-spacing:-0.938px;">38 °C</span><span class="l" style="left:1343.0px;top:4.30px;font-size:15px;line-height:15px;color:#dfdbd2;letter-spacing:-0.507px;white-space:pre;">Wed Jan  5, 10:08 PM</span><span class="l" style="left:1516.0px;top:4.30px;font-size:15px;line-height:15px;color:#dfdbd2;letter-spacing:-0.060px;">callum</span>
<div style="left:0px;top:1176px;width:1600px;height:24px;background:linear-gradient(#2e2d2a,#403f3a 12%,#3c3b37 60%,#3a3935);"></div><div style="left:522px;top:1176px;width:129px;height:24px;background:linear-gradient(#23221f,#2d2c29);"></div><div style="left:261px;top:1177px;width:1px;height:23px;background:rgba(30,29,27,.55);"></div><div style="left:391px;top:1177px;width:1px;height:23px;background:rgba(30,29,27,.55);"></div><div style="left:521px;top:1177px;width:1px;height:23px;background:rgba(30,29,27,.55);"></div><div style="left:651px;top:1177px;width:1px;height:23px;background:rgba(30,29,27,.55);"></div><div style="left:781px;top:1177px;width:1px;height:23px;background:rgba(30,29,27,.55);"></div><div style="left:911px;top:1177px;width:1px;height:23px;background:rgba(30,29,27,.55);"></div><div style="left:1041px;top:1177px;width:1px;height:23px;background:rgba(30,29,27,.55);"></div><div style="left:1171px;top:1177px;width:1px;height:23px;background:rgba(30,29,27,.55);"></div><div style="left:1301px;top:1177px;width:1px;height:23px;background:rgba(30,29,27,.55);"></div><svg style="left:3px;top:1177px" width="21" height="23" viewBox="0 0 21 23"><path d="M2 4h17l-2 18H4z" fill="#a9a8a3" stroke="#66655f"/><ellipse cx="10.500" cy="4" rx="8.500" ry="2.500" fill="#c9c8c3" stroke="#77766f"/><path d="M6 8l1 12M10.500 8v12M15 8l-1 12" stroke="#d9d8d3"/><path d="M4.500 9l4-3 3 3 4-3 1 4-2 6-4 3-4-3-2 1z" fill="#f1f0ec" opacity=".9"/><path d="M7 11l3 2 3-3M8 16l3-2 3 2" stroke="#b5b4af" fill="none" stroke-width=".8"/></svg><div style="left:27px;top:1178px;width:22px;height:21px;background:#2b2a27;border:1px solid #6c6a64;border-radius:2px;box-sizing:border-box;"></div><div style="left:28px;top:1181px;width:20px;height:15px;background:linear-gradient(#c339c4,#8c1a8e);"></div><div style="left:28px;top:1179px;width:20px;height:3px;background:#d8d6cf;"></div><div style="left:29px;top:1184px;width:4px;height:3px;background:#ead9ea;"></div><div style="left:29px;top:1189px;width:4px;height:3px;background:#ead9ea;"></div><svg style="left:51px;top:1177px" width="23" height="23" viewBox="0 0 23 23"><rect x="11" y="1" width="10" height="15" rx="1.500" fill="#f07a20" stroke="#a84c0c"/><rect x="13" y="0" width="6" height="3" fill="#f8b070"/><path d="M2 5h10v4l-2 2v11H5V11L2 9z" fill="#deddd8" stroke="#55544f"/><path d="M6.500 8v12M8.500 8v12" stroke="#3a3935"/></svg><svg style="left:76px;top:1178px" width="21" height="21" viewBox="0 0 21 21"><rect x=".5" y=".5" width="20" height="19" fill="#ecebe8" stroke="#8a8984"/><rect x=".5" y=".5" width="20" height="4" fill="#4a4944"/><path d="M12 6.500h1.500M15 6.500h1.500M18 6.500h1" stroke="#e0b040" stroke-width="1.200" transform="translate(0,-4)"/><path d="M5 9c0 3 2 4 4 4l6 7 2.500-2-6.500-6.500c0-2-1-4-4-4l2 2.500-1.500 1.500z" fill="#b9b8b3" stroke="#55544f" stroke-width=".8"/></svg><svg style="left:100px;top:1178px" width="21" height="21" viewBox="0 0 21 21"><rect x=".5" y=".5" width="20" height="19" fill="#f3f2ef" stroke="#8a8984"/><rect x=".5" y=".5" width="20" height="4" fill="#4a4944"/><path d="M12 2.500h1.500M15 2.500h1.500M18 2.500h1" stroke="#e0b040" stroke-width="1.200"/><path d="M3 7l9 6-9 6" fill="none" stroke="#2a2926" stroke-width="2.400"/></svg><div style="left:126px;top:1184px;width:3px;height:10px;background:repeating-linear-gradient(#5b5a54 0 1px,transparent 1px 3px);"></div><svg style="left:140px;top:1180px" width="17" height="17" viewBox="0 0 17 17"><rect x="1" y="1" width="12" height="15" fill="#f6f5f2" stroke="#8a8984"/><path d="M3 5h8M3 8h8M3 11h6" stroke="#8d8c88" stroke-width="1"/><path d="M15.500 2L7 12l-1 3 3-1 8-10z" fill="#3a3935"/><path d="M14.500 1.500l2 1.500" stroke="#e86aa0" stroke-width="2"/></svg><svg style="left:270px;top:1181px" width="17" height="15" viewBox="0 0 17 15"><rect x=".5" y=".5" width="16" height="14" rx="1" fill="#1b1a18" stroke="#cfcdc7"/><path d="M3 5l3 2.500L3 10M8 10.500h4" fill="none" stroke="#f2f1ed" stroke-width="1.200"/></svg><svg style="left:400px;top:1181px" width="16" height="14" viewBox="0 0 17 16"><rect x=".5" y=".5" width="16" height="15" rx="1" fill="#6d3a6e" stroke="#3a2a3b"/><rect x=".5" y=".5" width="16" height="3" fill="#8c8a83"/><rect x="2" y="5.500" width="4" height="2" fill="#9c7a9d"/><rect x="2" y="9" width="4" height="2" fill="#9c7a9d"/></svg><svg style="left:530px;top:1180px" width="17" height="17" viewBox="0 0 24 24"><defs><linearGradient id="xg3" x1="0" y1="0" x2="0" y2="1"><stop offset="0" stop-color="#ffe81a"/><stop offset=".46" stop-color="#f7a600"/><stop offset=".54" stop-color="#f4650a"/><stop offset="1" stop-color="#d93a08"/></linearGradient></defs><path d="M4.500 4L19.500 19.500M19.500 4L4.500 19.500" stroke="#2a1a08" stroke-width="6.400" stroke-linecap="square" fill="none"/><path d="M4.500 4L19.500 19.500M19.500 4L4.500 19.500" stroke="url(#xg3)" stroke-width="4.800" stroke-linecap="square" fill="none"/><text x="12" y="14.600" text-anchor="middle" font-family="Liberation Sans, sans-serif" font-weight="700" font-size="7.800" fill="#fff" stroke="#000" stroke-width="1.200" paint-order="stroke" textLength="23" lengthAdjust="spacingAndGlyphs">chat</text></svg><svg style="left:660px;top:1180px" width="17" height="17" viewBox="0 0 17 17"><circle cx="9" cy="8" r="6.500" fill="#3a6fc4"/><path d="M2 5C1 10 3 15 8.500 16c4 .5 7.500-2 8-6.500-1.500 3-4 4-6 3.500-2.500-.5-3.500-2.500-3-4l1.500-1.500C7.500 7 6 6 6 3.500 4.500 4 3 4.500 2 5z" fill="#e8641b"/><path d="M2 5C1.500 8 2 12 5 14.500 3.500 11 4 8 6.500 6 6 5 6 4.500 6 3.500 4.500 4 3 4.500 2 5z" fill="#f6a21c"/></svg><svg style="left:789px;top:1180px" width="16" height="17" viewBox="0 0 16 17"><ellipse cx="5.500" cy="10" rx="4.500" ry="5.500" fill="#3f77c2"/><ellipse cx="12" cy="8" rx="3" ry="4" fill="#3b6fb8"/><g fill="#9a988f"><circle cx="5" cy="2.500" r=".7"/><circle cx="8" cy="1.500" r=".7"/><circle cx="11" cy="2.500" r=".7"/></g></svg><svg style="left:920px;top:1180px" width="16" height="17" viewBox="0 0 16 17"><rect x="1" y="7" width="14" height="9" fill="#d8d7d2" stroke="#33322f"/><path d="M.5 3.500L14.500 1l.7 3L1.200 6.500z" fill="#2c2b28"/><path d="M3 3l2 2.500M7 2.300l2 2.500M11 1.600l2 2.500" stroke="#f2f1ed" stroke-width="1.200"/><rect x="1" y="7" width="14" height="2.500" fill="#2c2b28"/><path d="M3 7l2 2.500M7 7l2 2.500M11 7l2 2.500" stroke="#f2f1ed" stroke-width="1.200"/></svg><svg style="left:1050px;top:1179px" width="16" height="19" viewBox="0 0 16 19"><rect x="3" y="1" width="11" height="16.500" rx="2.500" fill="#ecebe7" stroke="#9d9c96"/><circle cx="8.500" cy="7.500" r="3.500" fill="#d9c52c" stroke="#6f6a3a"/><circle cx="8.500" cy="7.500" r="1.300" fill="#5f5a2d"/></svg><svg style="left:1182px;top:1181px" width="14" height="14" viewBox="0 0 14 14"><rect x=".5" y=".5" width="13" height="13" rx="1.500" fill="#e3e2de" stroke="#8a8984"/><path d="M4.500 10c0-2 4-1 4-3s-3-1.500-3.500-.500M8.500 7v3.500M6 3.500h2" fill="none" stroke="#55544f" stroke-width="1.100"/></svg><svg style="left:1337px;top:1178px" width="72" height="21" viewBox="0 0 72 21"><g fill="#dfdbd2"><rect x="1" y="4" width="2.500" height="13"/><path d="M12.500 4v13L3.500 10.500zM22 4v13l-9-6.500z"/><rect x="26" y="1" width="7" height="19" fill="#cfccc5"/><rect x="37" y="1" width="7" height="19" fill="#cfccc5"/><path d="M50 4v13l9-6.500zM59 4v13l9-6.500z"/><rect x="68" y="4" width="2.500" height="13"/></g></svg><svg style="left:1410px;top:1178px" width="24" height="21" viewBox="0 0 24 21"><path d="M3 3.500h10.500v14H3z" fill="#6b6b4a" stroke="#e6d98a" stroke-width="1.600" stroke-dasharray="1.400 1.200"/><rect x="3.500" y="4" width="9.500" height="13" fill="#63634a" stroke="#3e3e2c" stroke-width=".8"/><rect x="6" y="7.500" width="4.500" height="5.500" fill="#c9c9c2" stroke="#8a8a80" stroke-width=".6"/><path d="M1 7.500l2 3-2 3z" fill="#e6d98a"/><rect x="15.500" y="1" width="7" height="19" rx="1.500" fill="#5ad03f" stroke="#2f8a1e"/><rect x="17" y="2.500" width="2" height="16" fill="#8be878" opacity=".7"/></svg><svg style="left:1437px;top:1177px" width="41" height="23" viewBox="0 0 41 23"><rect width="41" height="23" fill="#000"/><path d="M0 23V19l1-1 1-4 1 5 1-1 1-8 1 7 1 1 1-9 1 10 1 1 2 1 1-2 1 2 2 1 1-1 1 1 2 0 1-3 1 3 1-1 1 1 1-9 1 8 1 1 1-1 1 1 1-8 1 8 2 1 1-2 1 2 2 0 1-2 1 1V23z" fill="#1c8edc"/></svg><div style="left:1480px;top:1177px;width:30px;height:23px;background:#ec7545;border:1px solid #f6c7b2;box-sizing:border-box;"></div><div style="left:1485px;top:1178px;width:13px;height:10px;background:#e96a3a;border:1px solid #fbe3d8;border-top:none;box-sizing:border-box;"></div><div style="left:1497px;top:1179px;width:5px;height:7px;background:#d9b7d8;border:1px solid #8a5a8a;box-sizing:border-box;"></div><div style="left:1483px;top:1188px;width:21px;height:12px;background:#fcbca0;border:1px solid #fff3ec;border-bottom:none;box-sizing:border-box;"></div><div style="left:1504px;top:1190px;width:4px;height:10px;background:#f9a988;"></div><div style="left:1488px;top:1185px;width:4px;height:1px;background:#fff;"></div><div style="left:1539px;top:1177px;width:1px;height:23px;background:rgba(30,29,27,.4);"></div><div style="left:1569px;top:1177px;width:1px;height:23px;background:rgba(30,29,27,.4);"></div><span class="l" style="left:164.0px;top:1180.30px;font-size:15px;line-height:15px;color:#dfdbd2;letter-spacing:0.593px;">print-prett...</span><span class="l" style="left:294.0px;top:1180.30px;font-size:15px;line-height:15px;color:#dfdbd2;letter-spacing:0.007px;">callum@ca...</span><span class="l" style="left:424.0px;top:1180.30px;font-size:15px;line-height:15px;color:#dfdbd2;letter-spacing:0.458px;">[Desktop]</span><span class="l" style="left:554.0px;top:1180.30px;font-size:15px;line-height:15px;color:#ffffff;letter-spacing:-0.170px;">XChat: Call...</span><span class="l" style="left:684.0px;top:1180.30px;font-size:15px;line-height:15px;color:#dfdbd2;letter-spacing:-0.192px;">Last Card - ...</span><span class="l" style="left:814.0px;top:1180.30px;font-size:15px;line-height:15px;color:#dfdbd2;letter-spacing:-0.005px;">Liam Cropp</span><span class="l" style="left:944.0px;top:1180.30px;font-size:15px;line-height:15px;color:#dfdbd2;letter-spacing:-0.170px;">O_MAP06...</span><span class="l" style="left:1074.0px;top:1180.30px;font-size:15px;line-height:15px;color:#dfdbd2;letter-spacing:0.087px;">Mario Gala...</span><span class="l" style="left:1204.0px;top:1180.30px;font-size:15px;line-height:15px;color:#dfdbd2;letter-spacing:0.075px;">Character ...</span><span class="l" style="left:1306.0px;top:1180.30px;font-size:15px;line-height:15px;color:#dfdbd2;letter-spacing:-0.301px;">1:27</span>
<div style="left:1001px;top:493px;width:7px;height:28px;background:#3b3a36;border-radius:0 4px 0 0;"></div><div style="left:342px;top:25px;width:661px;height:496px;background:#f2f1f0;border-radius:5px 5px 0 0;"></div><div style="left:342px;top:25px;width:661px;height:28px;background:linear-gradient(#4a4944,#3f3e3a 60%,#3b3a36);border-top:1px solid #4f4e49;border-left:1px solid #66655f;border-right:1px solid #66655f;box-sizing:border-box;border-radius:4px 4px 0 0;"></div><div style="left:343px;top:52px;width:659px;height:1px;background:#363531;"></div><div style="left:352.0px;top:29.0px;width:55px;height:19px;border-radius:9.500px;background:rgba(0,0,0,.10);box-shadow:0 1px 0 rgba(255,255,255,.05);"></div><div style="left:354.0px;top:31.0px;width:15px;height:15px;box-sizing:border-box;border-radius:50%;background:#5d5c56;border:1px solid #56554f;"></div><svg style="left:357.5px;top:34.5px" width="8" height="8" viewBox="0 0 8 8"><path d="M1.300 1.300l5.400 5.400M6.700 1.300l-5.400 5.400" stroke="#3a3935" stroke-width="1.100"/></svg><div style="left:372.0px;top:31.0px;width:15px;height:15px;box-sizing:border-box;border-radius:50%;background:#5d5c56;border:1px solid #56554f;"></div><div style="left:376.0px;top:38.0px;width:7px;height:1.2px;background:#3a3935;"></div><div style="left:390.0px;top:31.0px;width:15px;height:15px;box-sizing:border-box;border-radius:50%;background:#5d5c56;border:1px solid #56554f;"></div><div style="left:394.0px;top:35.5px;width:7px;height:6px;box-sizing:border-box;border:1px solid #3a3935;background:rgba(0,0,0,.08);"></div><div style="left:342px;top:53px;width:661px;height:25px;background:#3c3b37;border-left:1px solid #66655f;border-right:1px solid #66655f;box-sizing:border-box;"></div><div style="left:342px;top:78px;width:661px;height:30px;background:#f2f1f0;border-left:1px solid #8f8d88;border-right:2px solid #8f8d88;box-sizing:border-box;"></div><div style="left:672px;top:80px;width:329px;height:27px;border:1px solid #c3beb8;border-bottom:none;border-radius:5px 5px 0 0;background:linear-gradient(#f4f3f1,#e9e7e4 80%,#dddbd7);box-sizing:border-box;"></div><div style="left:343px;top:78px;width:328px;height:30px;border:1px solid #c3beb8;border-bottom:none;border-radius:5px 5px 0 0;background:linear-gradient(#fbfbfa,#f3f2f0);box-sizing:border-box;"></div><svg style="left:651px;top:86px" width="13" height="13" viewBox="0 0 13 13"><path d="M2 2l9 9M11 2l-9 9" stroke="#595853" stroke-width="3.600" stroke-linecap="butt"/></svg><svg style="left:981px;top:87px" width="13" height="13" viewBox="0 0 13 13"><path d="M2 2l9 9M11 2l-9 9" stroke="#595853" stroke-width="3.600" stroke-linecap="butt"/></svg><div style="left:342px;top:107px;width:661px;height:414px;background:#f2f1f0;border-left:1px solid #8f8d88;border-right:2px solid #8f8d88;border-bottom:2px solid #8f8d88;border-top:1px solid #c3beb8;box-sizing:border-box;"></div><div class="trm" style="left:345px;top:108px;width:642px;height:410px;background:#2e0a23;overflow:hidden;"><span style="left:1px;top:1px;color:#fff;">(BadnikNET) [#uno] &lt;GerbilSoft&gt; it uses hardlinks for everything else</span><span style="left:1px;top:18px;color:#fff;">(BadnikNET) [#uno] &lt;Callum&gt; yeah</span><span style="left:1px;top:35px;color:#fff;">(BadnikNET) [#uno] &lt;GerbilSoft&gt; *rsnapshot</span><span style="left:1px;top:52px;color:#fff;">(BadnikNET) [#uno] &lt;Callum&gt; heh</span><span style="left:1px;top:69px;color:#fff;">(BadnikNET) [#uno] &lt;Callum&gt; !command_run pl_reload pretty</span><span style="left:1px;top:86px;color:#fff;">(DamnBot) Reloaded plugin 'pretty'.</span><span style="left:1px;top:103px;color:#fff;">(BadnikNET) [#uno] &lt;Callum&gt; pl wd</span><span style="left:1px;top:120px;color:#fff;">(BadnikNET) [#uno] &lt;GerbilBot&gt;</span><span style="left:249px;top:120px;color:#6d4d72;">Callum</span><span style="left:305px;top:120px;color:#fff;">plays</span><span style="left:361px;top:120px;color:#555753;font-weight:700;">W</span><span style="left:369px;top:120px;background:#4e9a06;width:16px;color:#fff;font-weight:700;">I </span><span style="left:385px;top:120px;background:#cc0000;width:8px;color:#fff;font-weight:700;">L</span><span style="left:393px;top:120px;background:#3465a4;width:16px;color:#fff;font-weight:700;">D </span><span style="left:409px;top:120px;background:#c4a000;width:8px;color:#6b6446;font-weight:700;">D</span><span style="left:417px;top:120px;background:#4e9a06;width:8px;color:#fff;font-weight:700;">r</span><span style="left:425px;top:120px;background:#cc0000;width:8px;color:#fff;font-weight:700;">a</span><span style="left:433px;top:120px;background:#3465a4;width:16px;color:#fff;font-weight:700;">w </span><span style="left:449px;top:120px;background:#c4a000;width:8px;color:#6b6446;font-weight:700;">F</span><span style="left:457px;top:120px;background:#4e9a06;width:8px;color:#fff;font-weight:700;">o</span><span style="left:465px;top:120px;background:#cc0000;width:8px;color:#fff;font-weight:700;">u</span><span style="left:473px;top:120px;background:#3465a4;width:16px;color:#fff;font-weight:700;">r </span><span style="left:497px;top:120px;color:#4e9a06;">GerbilBot</span><span style="left:577px;top:120px;color:#fff;">draws</span><span style="left:625px;top:120px;color:#fff;font-weight:700;">fo</span><span style="left:1px;top:137px;color:#fff;font-weight:700;">ur cards</span><span style="left:73px;top:137px;color:#fff;">and is skipped... Choose a color</span><span style="left:337px;top:137px;color:#6d4d72;">Callum</span><span style="left:1px;top:154px;color:#fff;">(BadnikNET) [#uno] &lt;Callum&gt; believe it or not, DamnBot is coded in shell script</span><span style="left:1px;top:171px;color:#fff;">(BadnikNET) [#uno] &lt;Callum&gt; co e</span><span style="left:1px;top:188px;color:#fff;">(BadnikNET) [#uno] &lt;Callum&gt; co r</span><span style="left:1px;top:205px;color:#fff;">(BadnikNET) [#uno] &lt;GerbilBot&gt;</span><span style="left:249px;top:205px;color:#6d4d72;">Callum</span><span style="left:305px;top:205px;color:#fff;">chose</span><span style="left:353px;top:205px;background:#cc0000;width:40px;color:#fff;"> Red </span><span style="left:401px;top:205px;color:#fff;">play continues with</span><span style="left:561px;top:205px;color:#6d4d72;">Callum</span><span style="left:1px;top:222px;color:#fff;">(BadnikNET) [#uno] &lt;Callum&gt; pl r5</span><span style="left:1px;top:239px;color:#fff;">(BadnikNET) [#uno] &lt;GerbilBot&gt;</span><span style="left:249px;top:239px;color:#6d4d72;">Callum</span><span style="left:305px;top:239px;color:#fff;">plays</span><span style="left:353px;top:239px;background:#cc0000;width:56px;color:#fff;"> Red 5 </span><span style="left:417px;top:239px;color:#fff;">to</span><span style="left:441px;top:239px;color:#4e9a06;">GerbilBot</span><span style="left:1px;top:256px;color:#fff;">(BadnikNET) [#uno] &lt;GerbilBot&gt;</span><span style="left:249px;top:256px;color:#4e9a06;">GerbilBot</span><span style="left:329px;top:256px;color:#fff;">plays</span><span style="left:377px;top:256px;background:#cc0000;width:40px;color:#fff;"> Red </span><span style="left:417px;top:256px;background:#cc0000;width:64px;color:#fff;font-weight:700;">Draw Two</span><span style="left:481px;top:256px;background:#cc0000;width:8px;color:#fff;"> </span><span style="left:497px;top:256px;color:#6d4d72;">Callum</span><span style="left:553px;top:256px;color:#fff;">draws</span><span style="left:601px;top:256px;color:#fff;font-weight:700;">two c</span><span style="left:1px;top:273px;color:#fff;font-weight:700;">ards</span><span style="left:41px;top:273px;color:#fff;">and skips to</span><span style="left:145px;top:273px;color:#4e9a06;">GerbilBot</span><span style="left:1px;top:290px;color:#fff;">(BadnikNET) [#uno] &lt;GerbilBot&gt;</span><span style="left:249px;top:290px;color:#4e9a06;">GerbilBot</span><span style="left:329px;top:290px;color:#fff;">plays</span><span style="left:377px;top:290px;background:#cc0000;width:56px;color:#fff;"> Red 3 </span><span style="left:441px;top:290px;color:#fff;">to</span><span style="left:465px;top:290px;color:#6d4d72;">Callum</span><span style="left:1px;top:307px;color:#fff;">(BadnikNET) [#uno] &lt;Callum&gt; dr</span><span style="left:1px;top:324px;color:#fff;">(BadnikNET) [#uno] &lt;GerbilBot&gt;</span><span style="left:249px;top:324px;color:#6d4d72;">Callum</span><span style="left:305px;top:324px;color:#fff;font-weight:700;">drew</span><span style="left:345px;top:324px;color:#fff;">a card</span><span style="left:1px;top:341px;color:#fff;">(BadnikNET) [#uno] &lt;Callum&gt; pl r6</span><span style="left:1px;top:358px;color:#fff;">(BadnikNET) [#uno] &lt;GerbilBot&gt;</span><span style="left:249px;top:358px;color:#6d4d72;">Callum</span><span style="left:305px;top:358px;color:#fff;">plays</span><span style="left:353px;top:358px;background:#cc0000;width:56px;color:#fff;"> Red 6 </span><span style="left:417px;top:358px;color:#fff;">to</span><span style="left:441px;top:358px;color:#4e9a06;">GerbilBot</span><span style="left:1px;top:375px;color:#fff;">(BadnikNET) [#uno] &lt;GerbilBot&gt;</span><span style="left:249px;top:375px;color:#4e9a06;">GerbilBot</span><span style="left:329px;top:375px;color:#fff;">plays</span><span style="left:377px;top:375px;background:#cc0000;width:56px;color:#fff;"> Red 4 </span><span style="left:441px;top:375px;color:#fff;">to</span><span style="left:465px;top:375px;color:#6d4d72;">Callum</span><div style="position:absolute;left:1px;top:392px;width:8px;height:17px;border:1px solid #fff;box-sizing:border-box;"></div></div><div style="left:988px;top:109px;width:12px;height:409px;border:1px solid #bdb9b3;border-radius:7px;background:linear-gradient(90deg,#d9d6d2,#e8e6e3);box-sizing:border-box;"></div><svg style="left:991px;top:115px" width="6" height="4" viewBox="0 0 6 4"><path d="M0 4L3 .5 6 4z" fill="#8a8883"/></svg><svg style="left:991px;top:509px" width="6" height="4" viewBox="0 0 6 4"><path d="M0 0l3 3.500L6 0z" fill="#9a9893"/></svg><div style="left:988px;top:474px;width:12px;height:31px;border:1px solid #a9a59f;border-radius:7px;background:linear-gradient(90deg,#fbfbfa,#e9e7e4);box-sizing:border-box;"></div><div style="left:991px;top:485px;width:6px;height:8px;background:repeating-linear-gradient(#9c9993 0 1px,transparent 1px 3px);"></div><span class="l" style="left:418.5px;top:31.30px;font-size:15px;line-height:15px;color:#807d78;font-weight:700;letter-spacing:0.132px;">callum@callum: ~/Development/shellbot</span><span class="l" style="left:351.0px;top:58.30px;font-size:15px;line-height:15px;color:#dfdbd2;letter-spacing:-0.168px;">File</span><span class="l" style="left:389.0px;top:58.30px;font-size:15px;line-height:15px;color:#dfdbd2;letter-spacing:0.160px;">Edit</span><span class="l" style="left:430.5px;top:58.30px;font-size:15px;line-height:15px;color:#dfdbd2;letter-spacing:0.062px;">View</span><span class="l" style="left:477.0px;top:58.30px;font-size:15px;line-height:15px;color:#dfdbd2;letter-spacing:-0.422px;">Search</span><span class="l" style="left:536.0px;top:58.30px;font-size:15px;line-height:15px;color:#dfdbd2;letter-spacing:0.164px;">Terminal</span><span class="l" style="left:608.0px;top:58.30px;font-size:15px;line-height:15px;color:#dfdbd2;letter-spacing:-0.297px;">Tabs</span><span class="l" style="left:653.0px;top:58.30px;font-size:15px;line-height:15px;color:#dfdbd2;letter-spacing:-0.090px;">Help</span><span class="l" style="left:349.0px;top:85.30px;font-size:15px;line-height:15px;color:#3c3b37;letter-spacing:0.177px;">callum@callum: ~/Development/shellbot</span><span class="l" style="left:678.0px;top:86.30px;font-size:15px;line-height:15px;color:#65635e;letter-spacing:0.191px;">callum@callum: ~/Development/shellbot</span>
<div style="left:189px;top:521px;width:1182px;height:630px;background:#f2f1f0;border-radius:6px 6px 0 0;box-shadow:0 0 0 1px rgba(60,59,55,.25);"></div><div style="left:189px;top:521px;width:1182px;height:28px;background:linear-gradient(#55534d,#45443f 50%,#3d3c38);border-top:1px solid #6b6a64;border-radius:6px 6px 0 0;box-sizing:border-box;"></div><div style="left:198.5px;top:526.0px;width:55px;height:19px;border-radius:9.500px;background:rgba(0,0,0,.20);box-shadow:0 1px 0 rgba(255,255,255,.05);"></div><div style="left:200.5px;top:528.0px;width:15px;height:15px;box-sizing:border-box;border-radius:50%;background:radial-gradient(circle at 50% 25%,#f59a72,#e8602a 55%,#d24c19);border:1px solid #b3441a;"></div><svg style="left:204px;top:531.5px" width="8" height="8" viewBox="0 0 8 8"><path d="M1.300 1.300l5.400 5.400M6.700 1.300l-5.400 5.400" stroke="#4a1c08" stroke-width="1.100"/></svg><div style="left:218.5px;top:528.0px;width:15px;height:15px;box-sizing:border-box;border-radius:50%;background:radial-gradient(circle at 50% 25%,#9a9891,#73716a 65%,#605e58);border:1px solid #52504b;"></div><div style="left:222.5px;top:535.0px;width:7px;height:1.2px;background:#34332f;"></div><div style="left:236.5px;top:528.0px;width:15px;height:15px;box-sizing:border-box;border-radius:50%;background:radial-gradient(circle at 50% 25%,#9a9891,#73716a 65%,#605e58);border:1px solid #52504b;"></div><div style="left:240.5px;top:532.5px;width:7px;height:6px;box-sizing:border-box;border:1px solid #34332f;background:rgba(0,0,0,.08);"></div><div style="left:189px;top:549px;width:1182px;height:26px;background:#3c3b37;border-top:1px solid #33322e;box-sizing:border-box;"></div><div style="left:189px;top:575px;width:1px;height:576px;background:#bdbab4;"></div><div style="left:1369px;top:575px;width:2px;height:576px;background:linear-gradient(90deg,#d6d3ce,#aeaaa4);"></div><div style="left:189px;top:1150px;width:1182px;height:1px;background:#bebbb5;"></div><div style="left:192px;top:580px;width:1070px;height:24px;background:#fff;border:1px solid #aaa6a0;border-radius:3px;box-sizing:border-box;box-shadow:inset 0 1px 1px rgba(0,0,0,.08);"></div><div style="left:1269px;top:581px;width:99px;height:21px;border:1px solid #d3d0cb;background:#efeeec;box-sizing:border-box;"></div><div class="xc" style="left:192px;top:607px;width:1056px;height:479px;background:#f0f0f0;border:1px solid #c2beb8;border-bottom-color:#dedbd7;border-right-color:#d2cfca;box-sizing:border-box;overflow:hidden;"><div style="position:absolute;left:0;top:107px;width:1054px;height:1px;background:#c4292c;"></div><div style="position:absolute;left:108px;top:0;width:1px;height:477px;background:#8e8e96;"></div><span style="left:42px;top:2px;color:#c33b3b;font-weight:700;">GerbilBot</span><span style="left:112px;top:2px;color:#80267f;">Callum</span><span style="left:161px;top:2px;color:#000;">plays</span><span style="left:203px;top:2px;background:#4545e6;width:56px;color:#cccccc;"> Blue 1 </span><span style="left:273px;top:2px;color:#000;">to</span><span style="left:294px;top:2px;color:#b037b0;">GerbilBot</span><span style="left:42px;top:17px;color:#3636b2;">GerbilBot</span><span style="left:112px;top:17px;color:#b037b0;">GerbilBot</span><span style="left:182px;top:17px;color:#000;">plays</span><span style="left:224px;top:17px;background:#4545e6;width:42px;color:#cccccc;"> Blue </span><span style="left:266px;top:17px;background:#4545e6;width:49px;color:#cccccc;font-weight:700;">Reverse</span><span style="left:315px;top:17px;background:#4545e6;width:7px;color:#cccccc;"> </span><span style="left:336px;top:17px;color:#000;">to</span><span style="left:357px;top:17px;color:#b037b0;">GerbilBot</span><span style="left:42px;top:32px;color:#c33b3b;font-weight:700;">GerbilBot</span><span style="left:112px;top:32px;color:#b037b0;">GerbilBot</span><span style="left:182px;top:32px;color:#000;">plays</span><span style="left:224px;top:32px;background:#4545e6;width:56px;color:#cccccc;"> Blue 7 </span><span style="left:294px;top:32px;color:#000;">to</span><span style="left:315px;top:32px;color:#80267f;">Callum</span><span style="left:28px;top:47px;color:#3636b2;">-</span><span style="left:35px;top:47px;color:#b037b0;">GerbilBot</span><span style="left:98px;top:47px;color:#3636b2;">-</span><span style="left:112px;top:47px;background:#d9a641;width:14px;color:#000;font-weight:700;"> W</span><span style="left:126px;top:47px;background:#2a8c2a;width:14px;color:#cccccc;font-weight:700;">I </span><span style="left:140px;top:47px;background:#c33b3b;width:7px;color:#cccccc;font-weight:700;">L</span><span style="left:147px;top:47px;background:#4545e6;width:14px;color:#cccccc;font-weight:700;">D </span><span style="left:161px;top:47px;background:#d9a641;width:7px;color:#000;font-weight:700;">D</span><span style="left:168px;top:47px;background:#2a8c2a;width:7px;color:#cccccc;font-weight:700;">r</span><span style="left:175px;top:47px;background:#c33b3b;width:7px;color:#cccccc;font-weight:700;">a</span><span style="left:182px;top:47px;background:#4545e6;width:14px;color:#cccccc;font-weight:700;">w </span><span style="left:196px;top:47px;background:#d9a641;width:7px;color:#000;font-weight:700;">F</span><span style="left:203px;top:47px;background:#2a8c2a;width:7px;color:#cccccc;font-weight:700;">o</span><span style="left:210px;top:47px;background:#c33b3b;width:7px;color:#cccccc;font-weight:700;">u</span><span style="left:217px;top:47px;background:#4545e6;width:14px;color:#cccccc;font-weight:700;">r </span><span style="left:238px;top:47px;background:#d9a641;width:70px;color:#000;"> Yellow 8 </span><span style="left:315px;top:47px;background:#c33b3b;width:49px;color:#cccccc;"> Red 5 </span><span style="left:371px;top:47px;background:#2a8c2a;width:63px;color:#cccccc;"> Green 5 </span><span style="left:35px;top:62px;color:#3636b2;">GerbilSoft</span><span style="left:112px;top:62px;color:#000;">at least rsync only has to store changed versions</span><span style="left:35px;top:77px;color:#3636b2;">GerbilSoft</span><span style="left:112px;top:77px;color:#000;">it uses hardlinks for everything else</span><span style="left:63px;top:92px;color:#959595;">Callum</span><span style="left:112px;top:92px;color:#000;">yeah</span><span style="left:35px;top:107px;color:#3636b2;">GerbilSoft</span><span style="left:112px;top:107px;color:#000;">*rsnapshot</span><span style="left:63px;top:122px;color:#959595;">Callum</span><span style="left:112px;top:122px;color:#000;">heh</span><span style="left:63px;top:137px;color:#959595;">Callum</span><span style="left:112px;top:137px;color:#000;">!command_run pl_reload pretty</span><span style="left:63px;top:152px;color:#959595;">Callum</span><span style="left:112px;top:152px;color:#000;">pl wd</span><span style="left:42px;top:167px;color:#c33b3b;font-weight:700;">GerbilBot</span><span style="left:112px;top:167px;color:#80267f;">Callum</span><span style="left:161px;top:167px;color:#000;">plays</span><span style="left:203px;top:167px;background:#d9a641;width:14px;color:#000;font-weight:700;"> W</span><span style="left:217px;top:167px;background:#2a8c2a;width:14px;color:#cccccc;font-weight:700;">I </span><span style="left:231px;top:167px;background:#c33b3b;width:7px;color:#cccccc;font-weight:700;">L</span><span style="left:238px;top:167px;background:#4545e6;width:14px;color:#cccccc;font-weight:700;">D </span><span style="left:252px;top:167px;background:#d9a641;width:7px;color:#000;font-weight:700;">D</span><span style="left:259px;top:167px;background:#2a8c2a;width:7px;color:#cccccc;font-weight:700;">r</span><span style="left:266px;top:167px;background:#c33b3b;width:7px;color:#cccccc;font-weight:700;">a</span><span style="left:273px;top:167px;background:#4545e6;width:14px;color:#cccccc;font-weight:700;">w </span><span style="left:287px;top:167px;background:#d9a641;width:7px;color:#000;font-weight:700;">F</span><span style="left:294px;top:167px;background:#2a8c2a;width:7px;color:#cccccc;font-weight:700;">o</span><span style="left:301px;top:167px;background:#c33b3b;width:7px;color:#cccccc;font-weight:700;">u</span><span style="left:308px;top:167px;background:#4545e6;width:14px;color:#cccccc;font-weight:700;">r </span><span style="left:336px;top:167px;color:#b037b0;">GerbilBot</span><span style="left:406px;top:167px;color:#000;">draws</span><span style="left:448px;top:167px;color:#000;font-weight:700;">four cards</span><span style="left:525px;top:167px;color:#000;">and is skipped... Choose a color</span><span style="left:756px;top:167px;color:#80267f;">Callum</span><span style="left:63px;top:182px;color:#959595;">Callum</span><span style="left:112px;top:182px;color:#000;">believe it or not, DamnBot is coded in shell script</span><span style="left:63px;top:197px;color:#959595;">Callum</span><span style="left:112px;top:197px;color:#000;">co e</span><span style="left:28px;top:212px;color:#3636b2;">-</span><span style="left:35px;top:212px;color:#b037b0;">GerbilBot</span><span style="left:98px;top:212px;color:#3636b2;">-</span><span style="left:112px;top:212px;color:#000;">choose a valid color (r,g,b or y)</span><span style="left:63px;top:227px;color:#959595;">Callum</span><span style="left:112px;top:227px;color:#000;">co r</span><span style="left:42px;top:242px;color:#c33b3b;font-weight:700;">GerbilBot</span><span style="left:112px;top:242px;color:#80267f;">Callum</span><span style="left:161px;top:242px;color:#000;">chose</span><span style="left:203px;top:242px;background:#c33b3b;width:35px;color:#cccccc;"> Red </span><span style="left:238px;top:242px;color:#000;">, play continues with</span><span style="left:392px;top:242px;color:#80267f;">Callum</span><span style="left:28px;top:257px;color:#3636b2;">-</span><span style="left:35px;top:257px;color:#b037b0;">GerbilBot</span><span style="left:98px;top:257px;color:#3636b2;">-</span><span style="left:112px;top:257px;background:#d9a641;width:70px;color:#000;"> Yellow 8 </span><span style="left:189px;top:257px;background:#c33b3b;width:49px;color:#cccccc;"> Red 5 </span><span style="left:245px;top:257px;background:#2a8c2a;width:63px;color:#cccccc;"> Green 5 </span><span style="left:63px;top:272px;color:#959595;">Callum</span><span style="left:112px;top:272px;color:#000;">pl r5</span><span style="left:42px;top:287px;color:#c33b3b;font-weight:700;">GerbilBot</span><span style="left:112px;top:287px;color:#80267f;">Callum</span><span style="left:161px;top:287px;color:#000;">plays</span><span style="left:203px;top:287px;background:#c33b3b;width:49px;color:#cccccc;"> Red 5 </span><span style="left:266px;top:287px;color:#000;">to</span><span style="left:287px;top:287px;color:#b037b0;">GerbilBot</span><span style="left:42px;top:302px;color:#c33b3b;font-weight:700;">GerbilBot</span><span style="left:112px;top:302px;color:#b037b0;">GerbilBot</span><span style="left:182px;top:302px;color:#000;">plays</span><span style="left:224px;top:302px;background:#c33b3b;width:35px;color:#cccccc;"> Red </span><span style="left:259px;top:302px;background:#c33b3b;width:56px;color:#cccccc;font-weight:700;">Draw Two</span><span style="left:315px;top:302px;background:#c33b3b;width:7px;color:#cccccc;"> </span><span style="left:336px;top:302px;color:#80267f;">Callum</span><span style="left:385px;top:302px;color:#000;">draws</span><span style="left:427px;top:302px;color:#000;font-weight:700;">two cards</span><span style="left:497px;top:302px;color:#000;">and skips to</span><span style="left:588px;top:302px;color:#b037b0;">GerbilBot</span><span style="left:28px;top:317px;color:#3636b2;">-</span><span style="left:35px;top:317px;color:#b037b0;">GerbilBot</span><span style="left:98px;top:317px;color:#3636b2;">-</span><span style="left:112px;top:317px;color:#000;">Draw</span><span style="left:147px;top:317px;background:#4545e6;width:56px;color:#cccccc;"> Blue 7 </span><span style="left:210px;top:317px;background:#d9a641;width:70px;color:#000;"> Yellow 1 </span><span style="left:42px;top:332px;color:#c33b3b;font-weight:700;">GerbilBot</span><span style="left:112px;top:332px;color:#b037b0;">GerbilBot</span><span style="left:182px;top:332px;color:#000;">plays</span><span style="left:224px;top:332px;background:#c33b3b;width:49px;color:#cccccc;"> Red 3 </span><span style="left:287px;top:332px;color:#000;">to</span><span style="left:308px;top:332px;color:#80267f;">Callum</span><span style="left:28px;top:347px;color:#3636b2;">-</span><span style="left:35px;top:347px;color:#b037b0;">GerbilBot</span><span style="left:98px;top:347px;color:#3636b2;">-</span><span style="left:112px;top:347px;background:#d9a641;width:70px;color:#000;"> Yellow 8 </span><span style="left:189px;top:347px;background:#2a8c2a;width:63px;color:#cccccc;"> Green 5 </span><span style="left:259px;top:347px;background:#4545e6;width:56px;color:#cccccc;"> Blue 7 </span><span style="left:322px;top:347px;background:#d9a641;width:70px;color:#000;"> Yellow 1 </span><span style="left:63px;top:362px;color:#959595;">Callum</span><span style="left:112px;top:362px;color:#000;">dr</span><span style="left:28px;top:377px;color:#3636b2;">-</span><span style="left:35px;top:377px;color:#b037b0;">GerbilBot</span><span style="left:98px;top:377px;color:#3636b2;">-</span><span style="left:112px;top:377px;color:#000;">Draw</span><span style="left:147px;top:377px;background:#c33b3b;width:49px;color:#cccccc;"> Red 6 </span><span style="left:63px;top:392px;color:#959595;">Callum</span><span style="left:112px;top:392px;color:#000;">pl r6</span><span style="left:42px;top:407px;color:#c33b3b;font-weight:700;">GerbilBot</span><span style="left:112px;top:407px;color:#80267f;">Callum</span><span style="left:161px;top:407px;color:#000;font-weight:700;">drew</span><span style="left:196px;top:407px;color:#000;">a card</span><span style="left:42px;top:422px;color:#c33b3b;font-weight:700;">GerbilBot</span><span style="left:112px;top:422px;color:#80267f;">Callum</span><span style="left:161px;top:422px;color:#000;">plays</span><span style="left:203px;top:422px;background:#c33b3b;width:49px;color:#cccccc;"> Red 6 </span><span style="left:266px;top:422px;color:#000;">to</span><span style="left:287px;top:422px;color:#b037b0;">GerbilBot</span><span style="left:42px;top:437px;color:#c33b3b;font-weight:700;">GerbilBot</span><span style="left:112px;top:437px;color:#b037b0;">GerbilBot</span><span style="left:182px;top:437px;color:#000;">plays</span><span style="left:224px;top:437px;background:#c33b3b;width:49px;color:#cccccc;"> Red 4 </span><span style="left:287px;top:437px;color:#000;">to</span><span style="left:308px;top:437px;color:#80267f;">Callum</span><span style="left:28px;top:452px;color:#3636b2;">-</span><span style="left:35px;top:452px;color:#b037b0;">GerbilBot</span><span style="left:98px;top:452px;color:#3636b2;">-</span><span style="left:112px;top:452px;background:#d9a641;width:70px;color:#000;"> Yellow 8 </span><span style="left:189px;top:452px;background:#2a8c2a;width:63px;color:#cccccc;"> Green 5 </span><span style="left:259px;top:452px;background:#4545e6;width:56px;color:#cccccc;"> Blue 7 </span><span style="left:322px;top:452px;background:#d9a641;width:70px;color:#000;"> Yellow 1 </span></div><div style="left:1250px;top:608px;width:13px;height:478px;border:1px solid #bdb9b3;border-radius:7px;background:linear-gradient(90deg,#d9d6d2,#e8e6e3);box-sizing:border-box;"></div><svg style="left:1253px;top:615px" width="7" height="4" viewBox="0 0 7 4"><path d="M0 4L3.500 .5 7 4z" fill="#8a8883"/></svg><svg style="left:1253px;top:1078px" width="7" height="4" viewBox="0 0 7 4"><path d="M0 0l3.500 3.500L7 0z" fill="#a3a19b"/></svg><div style="left:1250px;top:1043px;width:13px;height:31px;border:1px solid #a9a59f;border-radius:7px;background:linear-gradient(90deg,#fbfbfa,#e9e7e4);box-sizing:border-box;"></div><div style="left:1253px;top:1054px;width:7px;height:8px;background:repeating-linear-gradient(#9c9993 0 1px,transparent 1px 3px);"></div><div style="left:1264px;top:843px;width:4px;height:9px;background:repeating-linear-gradient(#b5b2ac 0 1px,transparent 1px 3px);"></div><div style="left:1269px;top:607px;width:100px;height:494px;background:#fff;border:1px solid #b4b0aa;box-sizing:border-box;"></div><div style="left:1280px;top:608px;width:1px;height:137px;background:#d8d6d2;"></div><div style="left:1272px;top:615px;width:6px;height:6px;border-radius:50%;background:radial-gradient(circle at 40% 30%,#d77fd8,#8d0a8f 60%,#5c005e);"></div><div style="left:1272px;top:638px;width:6px;height:6px;border-radius:50%;background:radial-gradient(circle at 40% 30%,#f5e39a,#c9a227 60%,#8d6e10);"></div><div style="left:1270px;top:1103px;width:98px;height:6px;border-radius:3px;background:#e4e2df;box-shadow:inset 0 1px 1px rgba(0,0,0,.12);"></div><div style="left:1270px;top:1103px;width:19px;height:6px;border-radius:3px;background:#ef7446;border:1px solid #d2582c;box-sizing:border-box;"></div><div style="left:1270px;top:1112px;width:98px;height:6px;border-radius:3px;background:#e4e2df;box-shadow:inset 0 1px 1px rgba(0,0,0,.12);"></div><div style="left:250px;top:1092px;width:1012px;height:25px;background:#fff;border:1px solid #d95a2e;border-radius:4px;box-sizing:border-box;box-shadow:0 0 0 1px rgba(240,119,70,.28);"></div><div style="left:254px;top:1096px;width:1px;height:17px;background:#000;"></div><div style="left:192px;top:1124px;width:84px;height:26px;border:1px solid #aba7a1;border-radius:4px;background:linear-gradient(#f4f3f1,#e4e2df 60%,#d3d0cb);box-shadow:inset 0 1px 0 #fff;box-sizing:border-box;"></div><div style="left:278px;top:1124px;width:52px;height:26px;border:1px solid #aba7a1;border-radius:4px;background:linear-gradient(#f4f3f1,#e4e2df 60%,#d3d0cb);box-shadow:inset 0 1px 0 #fff;box-sizing:border-box;"></div><div style="left:332px;top:1124px;width:45px;height:26px;border:1px solid #9b9791;border-radius:4px;background:linear-gradient(#d6d3cf,#cbc8c3);box-shadow:inset 0 1px 2px rgba(0,0,0,.18);box-sizing:border-box;"></div><div style="left:382px;top:1125px;width:1px;height:24px;background:#dad7d2;border-right:1px solid #fbfaf9;"></div><div style="left:389px;top:1124px;width:97px;height:26px;border:1px solid #aba7a1;border-radius:4px;background:linear-gradient(#f4f3f1,#e4e2df 60%,#d3d0cb);box-shadow:inset 0 1px 0 #fff;box-sizing:border-box;"></div><div style="left:489px;top:1124px;width:59px;height:26px;border:1px solid #aba7a1;border-radius:4px;background:linear-gradient(#f4f3f1,#e4e2df 60%,#d3d0cb);box-shadow:inset 0 1px 0 #fff;box-sizing:border-box;"></div><div style="left:553px;top:1125px;width:1px;height:24px;background:#dad7d2;border-right:1px solid #fbfaf9;"></div><div style="left:560px;top:1124px;width:73px;height:26px;border:1px solid #aba7a1;border-radius:4px;background:linear-gradient(#f4f3f1,#e4e2df 60%,#d3d0cb);box-shadow:inset 0 1px 0 #fff;box-sizing:border-box;"></div><div style="left:635px;top:1124px;width:57px;height:26px;border:1px solid #aba7a1;border-radius:4px;background:linear-gradient(#f4f3f1,#e4e2df 60%,#d3d0cb);box-shadow:inset 0 1px 0 #fff;box-sizing:border-box;"></div><div style="left:694px;top:1124px;width:72px;height:26px;border:1px solid #aba7a1;border-radius:4px;background:linear-gradient(#f4f3f1,#e4e2df 60%,#d3d0cb);box-shadow:inset 0 1px 0 #fff;box-sizing:border-box;"></div><div style="left:768px;top:1124px;width:68px;height:26px;border:1px solid #aba7a1;border-radius:4px;background:linear-gradient(#f4f3f1,#e4e2df 60%,#d3d0cb);box-shadow:inset 0 1px 0 #fff;box-sizing:border-box;"></div><div style="left:838px;top:1124px;width:72px;height:26px;border:1px solid #aba7a1;border-radius:4px;background:linear-gradient(#f4f3f1,#e4e2df 60%,#d3d0cb);box-shadow:inset 0 1px 0 #fff;box-sizing:border-box;"></div><div style="left:912px;top:1124px;width:93px;height:26px;border:1px solid #aba7a1;border-radius:4px;background:linear-gradient(#f4f3f1,#e4e2df 60%,#d3d0cb);box-shadow:inset 0 1px 0 #fff;box-sizing:border-box;"></div><div style="left:1007px;top:1124px;width:52px;height:26px;border:1px solid #aba7a1;border-radius:4px;background:linear-gradient(#f4f3f1,#e4e2df 60%,#d3d0cb);box-shadow:inset 0 1px 0 #fff;box-sizing:border-box;"></div><div style="left:1064px;top:1125px;width:1px;height:24px;background:#dad7d2;border-right:1px solid #fbfaf9;"></div><div style="left:1071px;top:1124px;width:51px;height:26px;border:1px solid #aba7a1;border-radius:4px;background:linear-gradient(#f4f3f1,#e4e2df 60%,#d3d0cb);box-shadow:inset 0 1px 0 #fff;box-sizing:border-box;"></div><div style="left:1124px;top:1124px;width:90px;height:26px;border:1px solid #aba7a1;border-radius:4px;background:linear-gradient(#f4f3f1,#e4e2df 60%,#d3d0cb);box-shadow:inset 0 1px 0 #fff;box-sizing:border-box;"></div><div style="left:1216px;top:1122px;width:71px;height:29px;overflow:hidden;"><div style="left:0;top:2px;width:90px;height:26px;border:1px solid #aba7a1;border-radius:4px;background:linear-gradient(#f4f3f1,#e4e2df 60%,#d3d0cb);box-sizing:border-box;"></div></div><svg style="left:1297px;top:1132px" width="6" height="9" viewBox="0 0 6 9"><path d="M6 0v9L0 4.500z" fill="#8a8984"/></svg><svg style="left:1325px;top:1132px" width="6" height="9" viewBox="0 0 6 9"><path d="M0 0v9l6-4.500z" fill="#8a8984"/></svg><svg style="left:1348px;top:1130px" width="13" height="13" viewBox="0 0 13 13"><path d="M2 2l9 9M11 2l-9 9" stroke="#595853" stroke-width="3.600" stroke-linecap="butt"/></svg><span class="l" style="left:265.0px;top:528.30px;font-size:15px;line-height:15px;color:#dfdbd2;font-weight:700;letter-spacing:-0.032px;text-shadow:0 1px 0 rgba(0,0,0,.5);">XChat: Callum @ BadnikNET / #uno (+nrt)</span><span class="l" style="left:198.0px;top:554.80px;font-size:15px;line-height:15px;color:#dfdbd2;letter-spacing:-0.341px;">XChat</span><span class="l" style="left:252.5px;top:554.80px;font-size:15px;line-height:15px;color:#dfdbd2;letter-spacing:0.062px;">View</span><span class="l" style="left:299.5px;top:554.80px;font-size:15px;line-height:15px;color:#dfdbd2;letter-spacing:-0.448px;">Server</span><span class="l" style="left:356.0px;top:554.80px;font-size:15px;line-height:15px;color:#dfdbd2;letter-spacing:0.162px;">Settings</span><span class="l" style="left:426.0px;top:554.80px;font-size:15px;line-height:15px;color:#dfdbd2;letter-spacing:0.273px;">Window</span><span class="l" style="left:495.0px;top:554.80px;font-size:15px;line-height:15px;color:#dfdbd2;letter-spacing:-0.090px;">Help</span><span class="l" style="left:195.0px;top:584.30px;font-size:15px;line-height:15px;color:#2e2d2a;letter-spacing:-0.199px;">join a game, !unocmds for commands. | EXAMPLE: To play a Red 6: pl r6 | If GerbilBot isn't here, PANIC. | Games lost: OVER 9000 | &lt;Aquaslash&gt; I'm doing it wrong</span><span class="l" style="left:1276.0px;top:584.30px;font-size:15px;line-height:15px;color:#5f5e5a;letter-spacing:-0.029px;">1 ops, 6 total</span><span class="l" style="left:1285.0px;top:610.80px;font-size:15px;line-height:15px;color:#3c3b37;letter-spacing:0.330px;">GerbilSoft</span><span class="l" style="left:1285.0px;top:633.80px;font-size:15px;line-height:15px;color:#3c3b37;letter-spacing:0.385px;">GerbilBot</span><span class="l" style="left:1285.0px;top:656.80px;font-size:15px;line-height:15px;color:#3c3b37;letter-spacing:-0.198px;">Callum</span><span class="l" style="left:1285.0px;top:679.80px;font-size:15px;line-height:15px;color:#3c3b37;letter-spacing:0.353px;">DamnBot</span><span class="l" style="left:1285.0px;top:702.80px;font-size:15px;line-height:15px;color:#3c3b37;letter-spacing:-0.448px;">Sik</span><span class="l" style="left:1285.0px;top:725.80px;font-size:15px;line-height:15px;color:#3c3b37;letter-spacing:-0.130px;width:83px;overflow:hidden;">SonicFreak94</span><span class="l" style="left:197.0px;top:1096.80px;font-size:15px;line-height:15px;color:#3c3b37;letter-spacing:-0.198px;">Callum</span><span class="l" style="left:197.5px;top:1129.30px;font-size:15px;line-height:15px;color:#3c3b37;letter-spacing:-0.319px;">BadnikNET</span><span class="l" style="left:283.5px;top:1129.30px;font-size:15px;line-height:15px;color:#3c3b37;letter-spacing:-0.641px;">#SF94</span><span class="l" style="left:338.5px;top:1130.30px;font-size:15px;line-height:15px;color:#3c3b37;letter-spacing:0.031px;">#uno</span><span class="l" style="left:394.0px;top:1129.30px;font-size:15px;line-height:15px;color:#a40000;letter-spacing:0.023px;">AustChat.net</span><span class="l" style="left:494.0px;top:1129.30px;font-size:15px;line-height:15px;color:#a40000;letter-spacing:0.424px;">#trainz</span><span class="l" style="left:565.0px;top:1129.30px;font-size:15px;line-height:15px;color:#a40000;letter-spacing:-0.004px;">EsperNet</span><span class="l" style="left:640.5px;top:1129.30px;font-size:15px;line-height:15px;color:#ff0000;letter-spacing:0.021px;">#Blaze</span><span class="l" style="left:699.5px;top:1129.30px;font-size:15px;line-height:15px;color:#ff0000;letter-spacing:0.328px;">#srb2fun</span><span class="l" style="left:773.5px;top:1129.30px;font-size:15px;line-height:15px;color:#a40000;letter-spacing:0.453px;">#srb2jte</span><span class="l" style="left:843.5px;top:1129.30px;font-size:15px;line-height:15px;color:#a40000;letter-spacing:0.432px;">#srb2ogl</span><span class="l" style="left:917.5px;top:1129.30px;font-size:15px;line-height:15px;color:#a40000;letter-spacing:0.403px;">#srb2oldbie</span><span class="l" style="left:1012.5px;top:1129.30px;font-size:15px;line-height:15px;color:#a40000;letter-spacing:0.302px;">#tacis</span><span class="l" style="left:1076.0px;top:1129.30px;font-size:15px;line-height:15px;color:#a40000;letter-spacing:-0.403px;">EFNet</span><span class="l" style="left:1129.5px;top:1129.30px;font-size:15px;line-height:15px;color:#a40000;letter-spacing:0.514px;">#DoctorWii</span><span class="l" style="left:1221.5px;top:1129.30px;font-size:15px;line-height:15px;color:#a40000;letter-spacing:0.216px;width:65.500px;overflow:hidden;">#dolphin-emu</span>
<svg style="left:729px;top:1072px" width="18" height="24" viewBox="0 0 18 24"><defs><linearGradient id="curg" x1="0" y1="0" x2="1" y2="1"><stop offset="0" stop-color="#d9d9d9"/><stop offset=".6" stop-color="#ffffff"/></linearGradient></defs><path d="M3.300 2.400V20.400L7.300 16.700L10 22L12.600 20.800L10.200 15.300L14.900 14.400Z" fill="url(#curg)" stroke="#000" stroke-width="1.150" stroke-linejoin="miter"/></svg>
</div></body></html>
